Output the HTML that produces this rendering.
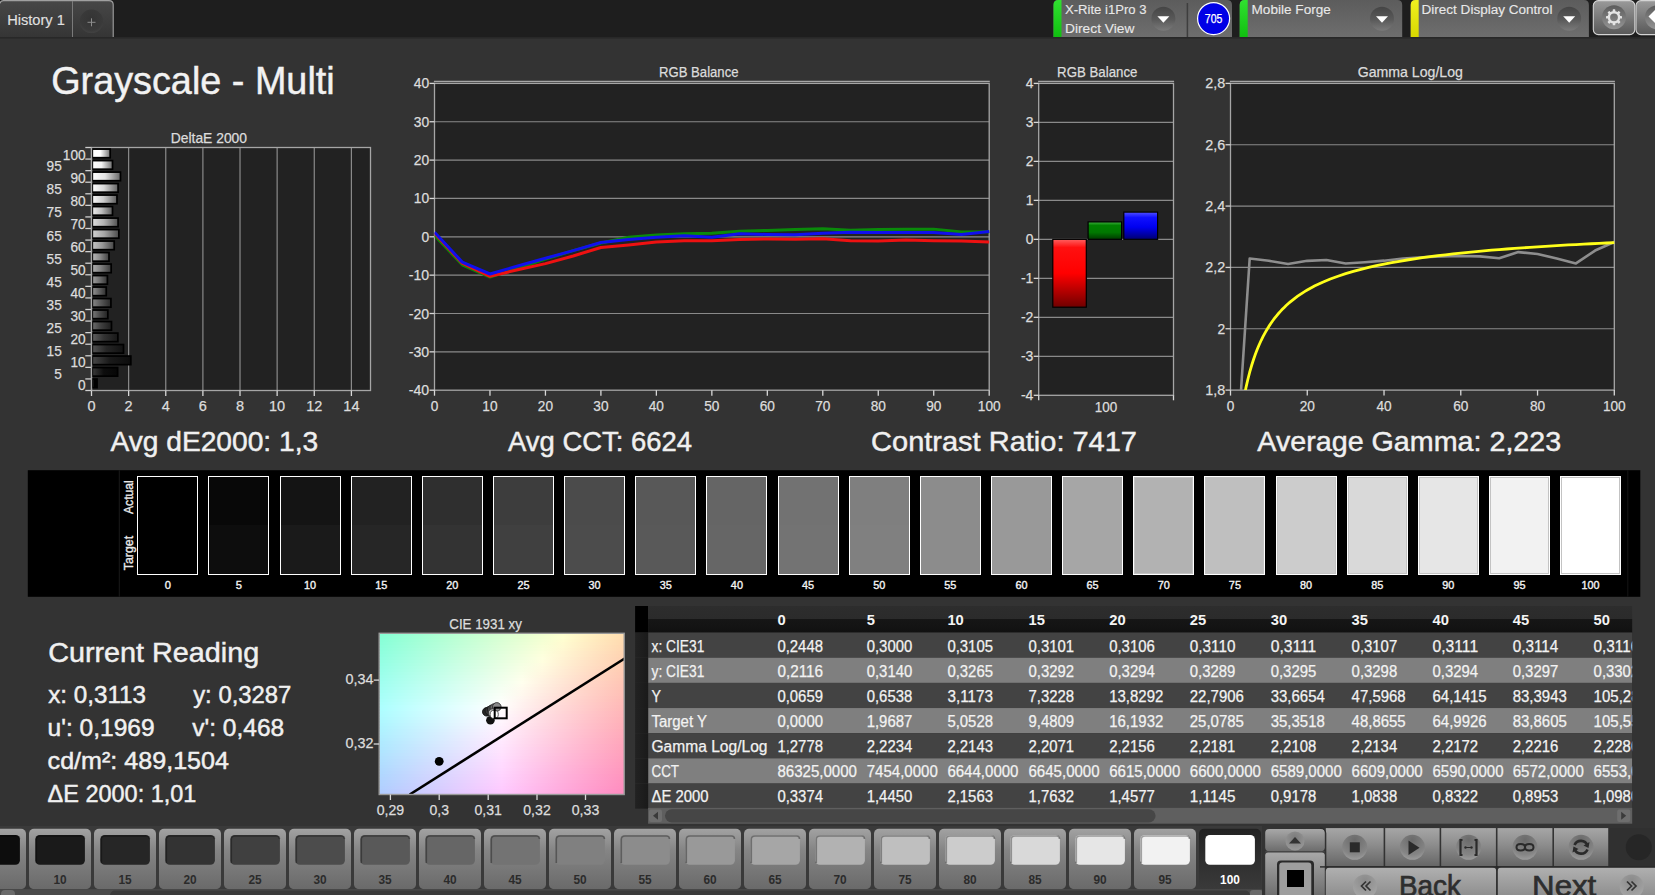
<!DOCTYPE html>
<html><head><meta charset="utf-8"><title>Grayscale - Multi</title>
<style>
html,body{margin:0;padding:0;background:#333;overflow:hidden;width:1655px;height:895px}
svg{display:block;font-family:"Liberation Sans",sans-serif}
</style></head><body>
<svg width="1655" height="895" viewBox="0 0 1655 895">
<defs>
<linearGradient id="gTab" x1="0" y1="0" x2="0" y2="1"><stop offset="0" stop-color="#474747"/><stop offset="1" stop-color="#353535"/></linearGradient>
<radialGradient id="gPlus" cx="0.5" cy="0.4" r="0.6"><stop offset="0" stop-color="#343434"/><stop offset="0.8" stop-color="#3a3a3a"/><stop offset="1" stop-color="#424242"/></radialGradient>
<linearGradient id="gBox" x1="0" y1="0" x2="0" y2="1"><stop offset="0" stop-color="#5c5c5c"/><stop offset="1" stop-color="#6e6e6e"/></linearGradient>
<linearGradient id="gDrop" x1="0" y1="0" x2="0" y2="1"><stop offset="0" stop-color="#454545"/><stop offset="0.55" stop-color="#5a5a5a"/><stop offset="1" stop-color="#7a7a7a"/></linearGradient>
<linearGradient id="gGreen" x1="0" y1="0" x2="0" y2="1"><stop offset="0" stop-color="#30e030"/><stop offset="1" stop-color="#10c010"/></linearGradient>
<linearGradient id="gYellow" x1="0" y1="0" x2="0" y2="1"><stop offset="0" stop-color="#f0f020"/><stop offset="1" stop-color="#d8d800"/></linearGradient>
<linearGradient id="gGearBtn" x1="0" y1="0" x2="0" y2="1"><stop offset="0" stop-color="#9a9a9a"/><stop offset="1" stop-color="#585858"/></linearGradient>
<linearGradient id="gGearC" x1="0" y1="0" x2="0" y2="1"><stop offset="0" stop-color="#5c5c5c"/><stop offset="1" stop-color="#959595"/></linearGradient>
<linearGradient id="gDB0" x1="0" y1="0" x2="1" y2="0"><stop offset="0" stop-color="rgb(45,45,45)"/><stop offset="0.45" stop-color="rgb(0,0,0)"/><stop offset="1" stop-color="rgb(0,0,0)"/></linearGradient>
<linearGradient id="gDB1" x1="0" y1="0" x2="1" y2="0"><stop offset="0" stop-color="rgb(58,58,58)"/><stop offset="0.45" stop-color="rgb(13,13,13)"/><stop offset="1" stop-color="rgb(6,6,6)"/></linearGradient>
<linearGradient id="gDB2" x1="0" y1="0" x2="1" y2="0"><stop offset="0" stop-color="rgb(71,71,71)"/><stop offset="0.45" stop-color="rgb(26,26,26)"/><stop offset="1" stop-color="rgb(12,12,12)"/></linearGradient>
<linearGradient id="gDB3" x1="0" y1="0" x2="1" y2="0"><stop offset="0" stop-color="rgb(83,83,83)"/><stop offset="0.45" stop-color="rgb(38,38,38)"/><stop offset="1" stop-color="rgb(17,17,17)"/></linearGradient>
<linearGradient id="gDB4" x1="0" y1="0" x2="1" y2="0"><stop offset="0" stop-color="rgb(96,96,96)"/><stop offset="0.45" stop-color="rgb(51,51,51)"/><stop offset="1" stop-color="rgb(23,23,23)"/></linearGradient>
<linearGradient id="gDB5" x1="0" y1="0" x2="1" y2="0"><stop offset="0" stop-color="rgb(109,109,109)"/><stop offset="0.45" stop-color="rgb(64,64,64)"/><stop offset="1" stop-color="rgb(29,29,29)"/></linearGradient>
<linearGradient id="gDB6" x1="0" y1="0" x2="1" y2="0"><stop offset="0" stop-color="rgb(121,121,121)"/><stop offset="0.45" stop-color="rgb(76,76,76)"/><stop offset="1" stop-color="rgb(34,34,34)"/></linearGradient>
<linearGradient id="gDB7" x1="0" y1="0" x2="1" y2="0"><stop offset="0" stop-color="rgb(134,134,134)"/><stop offset="0.45" stop-color="rgb(89,89,89)"/><stop offset="1" stop-color="rgb(40,40,40)"/></linearGradient>
<linearGradient id="gDB8" x1="0" y1="0" x2="1" y2="0"><stop offset="0" stop-color="rgb(147,147,147)"/><stop offset="0.45" stop-color="rgb(102,102,102)"/><stop offset="1" stop-color="rgb(46,46,46)"/></linearGradient>
<linearGradient id="gDB9" x1="0" y1="0" x2="1" y2="0"><stop offset="0" stop-color="rgb(160,160,160)"/><stop offset="0.45" stop-color="rgb(115,115,115)"/><stop offset="1" stop-color="rgb(52,52,52)"/></linearGradient>
<linearGradient id="gDB10" x1="0" y1="0" x2="1" y2="0"><stop offset="0" stop-color="rgb(173,173,173)"/><stop offset="0.45" stop-color="rgb(128,128,128)"/><stop offset="1" stop-color="rgb(58,58,58)"/></linearGradient>
<linearGradient id="gDB11" x1="0" y1="0" x2="1" y2="0"><stop offset="0" stop-color="rgb(185,185,185)"/><stop offset="0.45" stop-color="rgb(140,140,140)"/><stop offset="1" stop-color="rgb(63,63,63)"/></linearGradient>
<linearGradient id="gDB12" x1="0" y1="0" x2="1" y2="0"><stop offset="0" stop-color="rgb(198,198,198)"/><stop offset="0.45" stop-color="rgb(153,153,153)"/><stop offset="1" stop-color="rgb(69,69,69)"/></linearGradient>
<linearGradient id="gDB13" x1="0" y1="0" x2="1" y2="0"><stop offset="0" stop-color="rgb(211,211,211)"/><stop offset="0.45" stop-color="rgb(166,166,166)"/><stop offset="1" stop-color="rgb(75,75,75)"/></linearGradient>
<linearGradient id="gDB14" x1="0" y1="0" x2="1" y2="0"><stop offset="0" stop-color="rgb(223,223,223)"/><stop offset="0.45" stop-color="rgb(178,178,178)"/><stop offset="1" stop-color="rgb(80,80,80)"/></linearGradient>
<linearGradient id="gDB15" x1="0" y1="0" x2="1" y2="0"><stop offset="0" stop-color="rgb(236,236,236)"/><stop offset="0.45" stop-color="rgb(191,191,191)"/><stop offset="1" stop-color="rgb(86,86,86)"/></linearGradient>
<linearGradient id="gDB16" x1="0" y1="0" x2="1" y2="0"><stop offset="0" stop-color="rgb(249,249,249)"/><stop offset="0.45" stop-color="rgb(204,204,204)"/><stop offset="1" stop-color="rgb(92,92,92)"/></linearGradient>
<linearGradient id="gDB17" x1="0" y1="0" x2="1" y2="0"><stop offset="0" stop-color="rgb(255,255,255)"/><stop offset="0.45" stop-color="rgb(217,217,217)"/><stop offset="1" stop-color="rgb(98,98,98)"/></linearGradient>
<linearGradient id="gDB18" x1="0" y1="0" x2="1" y2="0"><stop offset="0" stop-color="rgb(255,255,255)"/><stop offset="0.45" stop-color="rgb(230,230,230)"/><stop offset="1" stop-color="rgb(104,104,104)"/></linearGradient>
<linearGradient id="gDB19" x1="0" y1="0" x2="1" y2="0"><stop offset="0" stop-color="rgb(255,255,255)"/><stop offset="0.45" stop-color="rgb(242,242,242)"/><stop offset="1" stop-color="rgb(109,109,109)"/></linearGradient>
<linearGradient id="gDB20" x1="0" y1="0" x2="1" y2="0"><stop offset="0" stop-color="rgb(255,255,255)"/><stop offset="0.45" stop-color="rgb(255,255,255)"/><stop offset="1" stop-color="rgb(115,115,115)"/></linearGradient>
<linearGradient id="gRed" x1="0" y1="0" x2="0" y2="1"><stop offset="0" stop-color="#ff6060"/><stop offset="0.12" stop-color="#ff1010"/><stop offset="0.5" stop-color="#ff0000"/><stop offset="1" stop-color="#700000"/></linearGradient>
<linearGradient id="gGrn" x1="0" y1="0" x2="0" y2="1"><stop offset="0" stop-color="#40b040"/><stop offset="0.2" stop-color="#008000"/><stop offset="0.6" stop-color="#007800"/><stop offset="1" stop-color="#003a00"/></linearGradient>
<linearGradient id="gBlu" x1="0" y1="0" x2="0" y2="1"><stop offset="0" stop-color="#5050ff"/><stop offset="0.2" stop-color="#1010ff"/><stop offset="0.55" stop-color="#0000f0"/><stop offset="1" stop-color="#000070"/></linearGradient>
<linearGradient id="gC0" x1="0" y1="0" x2="1" y2="0"><stop offset="0.000" stop-color="#84ffd4"/><stop offset="0.083" stop-color="#93ffd4"/><stop offset="0.167" stop-color="#a1ffd3"/><stop offset="0.250" stop-color="#afffd3"/><stop offset="0.333" stop-color="#bdffd2"/><stop offset="0.417" stop-color="#caffd2"/><stop offset="0.500" stop-color="#d7ffd1"/><stop offset="0.583" stop-color="#e4ffd1"/><stop offset="0.667" stop-color="#f1ffd0"/><stop offset="0.750" stop-color="#feffcf"/><stop offset="0.833" stop-color="#fff4c5"/><stop offset="0.917" stop-color="#ffe8ba"/><stop offset="1.000" stop-color="#ffddaf"/></linearGradient>
<linearGradient id="gC1" x1="0" y1="0" x2="1" y2="0"><stop offset="0.000" stop-color="#86ffd6"/><stop offset="0.083" stop-color="#95ffd6"/><stop offset="0.167" stop-color="#a3ffd5"/><stop offset="0.250" stop-color="#b1ffd4"/><stop offset="0.333" stop-color="#beffd4"/><stop offset="0.417" stop-color="#ccffd3"/><stop offset="0.500" stop-color="#d9ffd3"/><stop offset="0.583" stop-color="#e6ffd2"/><stop offset="0.667" stop-color="#f3ffd2"/><stop offset="0.750" stop-color="#ffffd1"/><stop offset="0.833" stop-color="#fff2c5"/><stop offset="0.917" stop-color="#ffe7ba"/><stop offset="1.000" stop-color="#ffdcaf"/></linearGradient>
<linearGradient id="gC2" x1="0" y1="0" x2="1" y2="0"><stop offset="0.000" stop-color="#88ffd8"/><stop offset="0.083" stop-color="#96ffd7"/><stop offset="0.167" stop-color="#a4ffd7"/><stop offset="0.250" stop-color="#b2ffd6"/><stop offset="0.333" stop-color="#c0ffd6"/><stop offset="0.417" stop-color="#cdffd5"/><stop offset="0.500" stop-color="#daffd5"/><stop offset="0.583" stop-color="#e7ffd4"/><stop offset="0.667" stop-color="#f4ffd4"/><stop offset="0.750" stop-color="#fffdd1"/><stop offset="0.833" stop-color="#fff1c5"/><stop offset="0.917" stop-color="#ffe5ba"/><stop offset="1.000" stop-color="#ffdab0"/></linearGradient>
<linearGradient id="gC3" x1="0" y1="0" x2="1" y2="0"><stop offset="0.000" stop-color="#89ffd9"/><stop offset="0.083" stop-color="#98ffd9"/><stop offset="0.167" stop-color="#a6ffd8"/><stop offset="0.250" stop-color="#b4ffd8"/><stop offset="0.333" stop-color="#c1ffd7"/><stop offset="0.417" stop-color="#cfffd7"/><stop offset="0.500" stop-color="#dcffd6"/><stop offset="0.583" stop-color="#e9ffd6"/><stop offset="0.667" stop-color="#f6ffd5"/><stop offset="0.750" stop-color="#fffbd1"/><stop offset="0.833" stop-color="#ffefc6"/><stop offset="0.917" stop-color="#ffe4bb"/><stop offset="1.000" stop-color="#ffd9b0"/></linearGradient>
<linearGradient id="gC4" x1="0" y1="0" x2="1" y2="0"><stop offset="0.000" stop-color="#8bffdb"/><stop offset="0.083" stop-color="#99ffdb"/><stop offset="0.167" stop-color="#a7ffda"/><stop offset="0.250" stop-color="#b5ffda"/><stop offset="0.333" stop-color="#c3ffd9"/><stop offset="0.417" stop-color="#d0ffd9"/><stop offset="0.500" stop-color="#deffd8"/><stop offset="0.583" stop-color="#ebffd8"/><stop offset="0.667" stop-color="#f8ffd7"/><stop offset="0.750" stop-color="#fffad2"/><stop offset="0.833" stop-color="#ffeec6"/><stop offset="0.917" stop-color="#ffe2bb"/><stop offset="1.000" stop-color="#ffd7b0"/></linearGradient>
<linearGradient id="gC5" x1="0" y1="0" x2="1" y2="0"><stop offset="0.000" stop-color="#8cffdd"/><stop offset="0.083" stop-color="#9bffdc"/><stop offset="0.167" stop-color="#a9ffdc"/><stop offset="0.250" stop-color="#b7ffdb"/><stop offset="0.333" stop-color="#c5ffdb"/><stop offset="0.417" stop-color="#d2ffda"/><stop offset="0.500" stop-color="#dfffda"/><stop offset="0.583" stop-color="#ecffda"/><stop offset="0.667" stop-color="#f9ffd9"/><stop offset="0.750" stop-color="#fff8d2"/><stop offset="0.833" stop-color="#ffecc6"/><stop offset="0.917" stop-color="#ffe1bb"/><stop offset="1.000" stop-color="#ffd6b1"/></linearGradient>
<linearGradient id="gC6" x1="0" y1="0" x2="1" y2="0"><stop offset="0.000" stop-color="#8effde"/><stop offset="0.083" stop-color="#9cffde"/><stop offset="0.167" stop-color="#abffde"/><stop offset="0.250" stop-color="#b9ffdd"/><stop offset="0.333" stop-color="#c6ffdd"/><stop offset="0.417" stop-color="#d4ffdc"/><stop offset="0.500" stop-color="#e1ffdc"/><stop offset="0.583" stop-color="#eeffdb"/><stop offset="0.667" stop-color="#fbffdb"/><stop offset="0.750" stop-color="#fff6d2"/><stop offset="0.833" stop-color="#ffeac7"/><stop offset="0.917" stop-color="#ffdfbc"/><stop offset="1.000" stop-color="#ffd4b1"/></linearGradient>
<linearGradient id="gC7" x1="0" y1="0" x2="1" y2="0"><stop offset="0.000" stop-color="#8fffe0"/><stop offset="0.083" stop-color="#9effe0"/><stop offset="0.167" stop-color="#acffdf"/><stop offset="0.250" stop-color="#baffdf"/><stop offset="0.333" stop-color="#c8ffde"/><stop offset="0.417" stop-color="#d5ffde"/><stop offset="0.500" stop-color="#e3ffde"/><stop offset="0.583" stop-color="#f0ffdd"/><stop offset="0.667" stop-color="#fdffdd"/><stop offset="0.750" stop-color="#fff5d3"/><stop offset="0.833" stop-color="#ffe9c7"/><stop offset="0.917" stop-color="#ffddbc"/><stop offset="1.000" stop-color="#ffd3b1"/></linearGradient>
<linearGradient id="gC8" x1="0" y1="0" x2="1" y2="0"><stop offset="0.000" stop-color="#91ffe2"/><stop offset="0.083" stop-color="#a0ffe1"/><stop offset="0.167" stop-color="#aeffe1"/><stop offset="0.250" stop-color="#bcffe1"/><stop offset="0.333" stop-color="#caffe0"/><stop offset="0.417" stop-color="#d7ffe0"/><stop offset="0.500" stop-color="#e4ffdf"/><stop offset="0.583" stop-color="#f1ffdf"/><stop offset="0.667" stop-color="#feffdf"/><stop offset="0.750" stop-color="#fff3d3"/><stop offset="0.833" stop-color="#ffe7c7"/><stop offset="0.917" stop-color="#ffdcbc"/><stop offset="1.000" stop-color="#ffd1b2"/></linearGradient>
<linearGradient id="gC9" x1="0" y1="0" x2="1" y2="0"><stop offset="0.000" stop-color="#93ffe3"/><stop offset="0.083" stop-color="#a1ffe3"/><stop offset="0.167" stop-color="#afffe3"/><stop offset="0.250" stop-color="#bdffe2"/><stop offset="0.333" stop-color="#cbffe2"/><stop offset="0.417" stop-color="#d9ffe2"/><stop offset="0.500" stop-color="#e6ffe1"/><stop offset="0.583" stop-color="#f3ffe1"/><stop offset="0.667" stop-color="#fffedf"/><stop offset="0.750" stop-color="#fff1d3"/><stop offset="0.833" stop-color="#ffe5c8"/><stop offset="0.917" stop-color="#ffdabc"/><stop offset="1.000" stop-color="#ffcfb2"/></linearGradient>
<linearGradient id="gC10" x1="0" y1="0" x2="1" y2="0"><stop offset="0.000" stop-color="#94ffe5"/><stop offset="0.083" stop-color="#a3ffe5"/><stop offset="0.167" stop-color="#b1ffe4"/><stop offset="0.250" stop-color="#bfffe4"/><stop offset="0.333" stop-color="#cdffe4"/><stop offset="0.417" stop-color="#daffe3"/><stop offset="0.500" stop-color="#e8ffe3"/><stop offset="0.583" stop-color="#f5ffe3"/><stop offset="0.667" stop-color="#fffce0"/><stop offset="0.750" stop-color="#fff0d3"/><stop offset="0.833" stop-color="#ffe4c8"/><stop offset="0.917" stop-color="#ffd9bd"/><stop offset="1.000" stop-color="#ffceb2"/></linearGradient>
<linearGradient id="gC11" x1="0" y1="0" x2="1" y2="0"><stop offset="0.000" stop-color="#96ffe7"/><stop offset="0.083" stop-color="#a4ffe7"/><stop offset="0.167" stop-color="#b3ffe6"/><stop offset="0.250" stop-color="#c1ffe6"/><stop offset="0.333" stop-color="#ceffe6"/><stop offset="0.417" stop-color="#dcffe5"/><stop offset="0.500" stop-color="#e9ffe5"/><stop offset="0.583" stop-color="#f7ffe5"/><stop offset="0.667" stop-color="#fffae0"/><stop offset="0.750" stop-color="#ffeed4"/><stop offset="0.833" stop-color="#ffe2c8"/><stop offset="0.917" stop-color="#ffd7bd"/><stop offset="1.000" stop-color="#ffccb3"/></linearGradient>
<linearGradient id="gC12" x1="0" y1="0" x2="1" y2="0"><stop offset="0.000" stop-color="#97ffe9"/><stop offset="0.083" stop-color="#a6ffe8"/><stop offset="0.167" stop-color="#b4ffe8"/><stop offset="0.250" stop-color="#c2ffe8"/><stop offset="0.333" stop-color="#d0ffe7"/><stop offset="0.417" stop-color="#deffe7"/><stop offset="0.500" stop-color="#ebffe7"/><stop offset="0.583" stop-color="#f8ffe6"/><stop offset="0.667" stop-color="#fff9e0"/><stop offset="0.750" stop-color="#ffecd4"/><stop offset="0.833" stop-color="#ffe1c8"/><stop offset="0.917" stop-color="#ffd5bd"/><stop offset="1.000" stop-color="#ffcbb3"/></linearGradient>
<linearGradient id="gC13" x1="0" y1="0" x2="1" y2="0"><stop offset="0.000" stop-color="#99ffea"/><stop offset="0.083" stop-color="#a8ffea"/><stop offset="0.167" stop-color="#b6ffea"/><stop offset="0.250" stop-color="#c4ffe9"/><stop offset="0.333" stop-color="#d2ffe9"/><stop offset="0.417" stop-color="#dfffe9"/><stop offset="0.500" stop-color="#edffe9"/><stop offset="0.583" stop-color="#faffe8"/><stop offset="0.667" stop-color="#fff7e0"/><stop offset="0.750" stop-color="#ffebd4"/><stop offset="0.833" stop-color="#ffdfc9"/><stop offset="0.917" stop-color="#ffd4be"/><stop offset="1.000" stop-color="#ffc9b3"/></linearGradient>
<linearGradient id="gC14" x1="0" y1="0" x2="1" y2="0"><stop offset="0.000" stop-color="#9bffec"/><stop offset="0.083" stop-color="#a9ffec"/><stop offset="0.167" stop-color="#b8ffec"/><stop offset="0.250" stop-color="#c6ffeb"/><stop offset="0.333" stop-color="#d4ffeb"/><stop offset="0.417" stop-color="#e1ffeb"/><stop offset="0.500" stop-color="#efffea"/><stop offset="0.583" stop-color="#fcffea"/><stop offset="0.667" stop-color="#fff5e0"/><stop offset="0.750" stop-color="#ffe9d4"/><stop offset="0.833" stop-color="#ffddc9"/><stop offset="0.917" stop-color="#ffd2be"/><stop offset="1.000" stop-color="#ffc8b4"/></linearGradient>
<linearGradient id="gC15" x1="0" y1="0" x2="1" y2="0"><stop offset="0.000" stop-color="#9cffee"/><stop offset="0.083" stop-color="#abffee"/><stop offset="0.167" stop-color="#b9ffed"/><stop offset="0.250" stop-color="#c7ffed"/><stop offset="0.333" stop-color="#d5ffed"/><stop offset="0.417" stop-color="#e3ffed"/><stop offset="0.500" stop-color="#f0ffec"/><stop offset="0.583" stop-color="#feffec"/><stop offset="0.667" stop-color="#fff3e1"/><stop offset="0.750" stop-color="#ffe7d5"/><stop offset="0.833" stop-color="#ffdcc9"/><stop offset="0.917" stop-color="#ffd1be"/><stop offset="1.000" stop-color="#ffc6b4"/></linearGradient>
<linearGradient id="gC16" x1="0" y1="0" x2="1" y2="0"><stop offset="0.000" stop-color="#9efff0"/><stop offset="0.083" stop-color="#adffef"/><stop offset="0.167" stop-color="#bbffef"/><stop offset="0.250" stop-color="#c9ffef"/><stop offset="0.333" stop-color="#d7ffef"/><stop offset="0.417" stop-color="#e5ffee"/><stop offset="0.500" stop-color="#f2ffee"/><stop offset="0.583" stop-color="#ffffee"/><stop offset="0.667" stop-color="#fff2e1"/><stop offset="0.750" stop-color="#ffe6d5"/><stop offset="0.833" stop-color="#ffdaca"/><stop offset="0.917" stop-color="#ffcfbf"/><stop offset="1.000" stop-color="#ffc5b4"/></linearGradient>
<linearGradient id="gC17" x1="0" y1="0" x2="1" y2="0"><stop offset="0.000" stop-color="#a0fff1"/><stop offset="0.083" stop-color="#aefff1"/><stop offset="0.167" stop-color="#bdfff1"/><stop offset="0.250" stop-color="#cbfff1"/><stop offset="0.333" stop-color="#d9fff1"/><stop offset="0.417" stop-color="#e6fff0"/><stop offset="0.500" stop-color="#f4fff0"/><stop offset="0.583" stop-color="#fffdee"/><stop offset="0.667" stop-color="#fff0e1"/><stop offset="0.750" stop-color="#ffe4d5"/><stop offset="0.833" stop-color="#ffd8ca"/><stop offset="0.917" stop-color="#ffcebf"/><stop offset="1.000" stop-color="#ffc3b5"/></linearGradient>
<linearGradient id="gC18" x1="0" y1="0" x2="1" y2="0"><stop offset="0.000" stop-color="#a1fff3"/><stop offset="0.083" stop-color="#b0fff3"/><stop offset="0.167" stop-color="#befff3"/><stop offset="0.250" stop-color="#ccfff3"/><stop offset="0.333" stop-color="#dafff2"/><stop offset="0.417" stop-color="#e8fff2"/><stop offset="0.500" stop-color="#f6fff2"/><stop offset="0.583" stop-color="#fffbee"/><stop offset="0.667" stop-color="#ffeee1"/><stop offset="0.750" stop-color="#ffe2d5"/><stop offset="0.833" stop-color="#ffd7ca"/><stop offset="0.917" stop-color="#ffccbf"/><stop offset="1.000" stop-color="#ffc2b5"/></linearGradient>
<linearGradient id="gC19" x1="0" y1="0" x2="1" y2="0"><stop offset="0.000" stop-color="#a3fff5"/><stop offset="0.083" stop-color="#b2fff5"/><stop offset="0.167" stop-color="#c0fff5"/><stop offset="0.250" stop-color="#cefff4"/><stop offset="0.333" stop-color="#dcfff4"/><stop offset="0.417" stop-color="#eafff4"/><stop offset="0.500" stop-color="#f7fff4"/><stop offset="0.583" stop-color="#fff9ee"/><stop offset="0.667" stop-color="#ffede2"/><stop offset="0.750" stop-color="#ffe1d6"/><stop offset="0.833" stop-color="#ffd5ca"/><stop offset="0.917" stop-color="#ffcac0"/><stop offset="1.000" stop-color="#ffc0b5"/></linearGradient>
<linearGradient id="gC20" x1="0" y1="0" x2="1" y2="0"><stop offset="0.000" stop-color="#a5fff7"/><stop offset="0.083" stop-color="#b3fff7"/><stop offset="0.167" stop-color="#c2fff6"/><stop offset="0.250" stop-color="#d0fff6"/><stop offset="0.333" stop-color="#defff6"/><stop offset="0.417" stop-color="#ecfff6"/><stop offset="0.500" stop-color="#f9fff6"/><stop offset="0.583" stop-color="#fff8ee"/><stop offset="0.667" stop-color="#ffebe2"/><stop offset="0.750" stop-color="#ffdfd6"/><stop offset="0.833" stop-color="#ffd4cb"/><stop offset="0.917" stop-color="#ffc9c0"/><stop offset="1.000" stop-color="#ffbfb6"/></linearGradient>
<linearGradient id="gC21" x1="0" y1="0" x2="1" y2="0"><stop offset="0.000" stop-color="#a6fff8"/><stop offset="0.083" stop-color="#b5fff8"/><stop offset="0.167" stop-color="#c3fff8"/><stop offset="0.250" stop-color="#d2fff8"/><stop offset="0.333" stop-color="#e0fff8"/><stop offset="0.417" stop-color="#edfff8"/><stop offset="0.500" stop-color="#fbfff8"/><stop offset="0.583" stop-color="#fff6ef"/><stop offset="0.667" stop-color="#ffe9e2"/><stop offset="0.750" stop-color="#ffddd6"/><stop offset="0.833" stop-color="#ffd2cb"/><stop offset="0.917" stop-color="#ffc7c0"/><stop offset="1.000" stop-color="#ffbdb6"/></linearGradient>
<linearGradient id="gC22" x1="0" y1="0" x2="1" y2="0"><stop offset="0.000" stop-color="#a8fffa"/><stop offset="0.083" stop-color="#b7fffa"/><stop offset="0.167" stop-color="#c5fffa"/><stop offset="0.250" stop-color="#d3fffa"/><stop offset="0.333" stop-color="#e1fffa"/><stop offset="0.417" stop-color="#effffa"/><stop offset="0.500" stop-color="#fdfffa"/><stop offset="0.583" stop-color="#fff4ef"/><stop offset="0.667" stop-color="#ffe7e2"/><stop offset="0.750" stop-color="#ffdcd6"/><stop offset="0.833" stop-color="#ffd0cb"/><stop offset="0.917" stop-color="#ffc6c0"/><stop offset="1.000" stop-color="#ffbbb6"/></linearGradient>
<linearGradient id="gC23" x1="0" y1="0" x2="1" y2="0"><stop offset="0.000" stop-color="#aafffc"/><stop offset="0.083" stop-color="#b8fffc"/><stop offset="0.167" stop-color="#c7fffc"/><stop offset="0.250" stop-color="#d5fffc"/><stop offset="0.333" stop-color="#e3fffc"/><stop offset="0.417" stop-color="#f1fffc"/><stop offset="0.500" stop-color="#fffffc"/><stop offset="0.583" stop-color="#fff2ef"/><stop offset="0.667" stop-color="#ffe6e2"/><stop offset="0.750" stop-color="#ffdad7"/><stop offset="0.833" stop-color="#ffcfcb"/><stop offset="0.917" stop-color="#ffc4c1"/><stop offset="1.000" stop-color="#ffbab7"/></linearGradient>
<linearGradient id="gC24" x1="0" y1="0" x2="1" y2="0"><stop offset="0.000" stop-color="#abfffe"/><stop offset="0.083" stop-color="#bafffe"/><stop offset="0.167" stop-color="#c9fffe"/><stop offset="0.250" stop-color="#d7fffe"/><stop offset="0.333" stop-color="#e5fffe"/><stop offset="0.417" stop-color="#f3fffe"/><stop offset="0.500" stop-color="#fffefc"/><stop offset="0.583" stop-color="#fff1ef"/><stop offset="0.667" stop-color="#ffe4e3"/><stop offset="0.750" stop-color="#ffd8d7"/><stop offset="0.833" stop-color="#ffcdcc"/><stop offset="0.917" stop-color="#ffc3c1"/><stop offset="1.000" stop-color="#ffb8b7"/></linearGradient>
<linearGradient id="gC25" x1="0" y1="0" x2="1" y2="0"><stop offset="0.000" stop-color="#acfeff"/><stop offset="0.083" stop-color="#bbfeff"/><stop offset="0.167" stop-color="#cafeff"/><stop offset="0.250" stop-color="#d8feff"/><stop offset="0.333" stop-color="#e6feff"/><stop offset="0.417" stop-color="#f4feff"/><stop offset="0.500" stop-color="#fffcfc"/><stop offset="0.583" stop-color="#ffefef"/><stop offset="0.667" stop-color="#ffe2e3"/><stop offset="0.750" stop-color="#ffd7d7"/><stop offset="0.833" stop-color="#ffcccc"/><stop offset="0.917" stop-color="#ffc1c1"/><stop offset="1.000" stop-color="#ffb7b7"/></linearGradient>
<linearGradient id="gC26" x1="0" y1="0" x2="1" y2="0"><stop offset="0.000" stop-color="#adfcff"/><stop offset="0.083" stop-color="#bbfcff"/><stop offset="0.167" stop-color="#cafcff"/><stop offset="0.250" stop-color="#d8fcff"/><stop offset="0.333" stop-color="#e6fcff"/><stop offset="0.417" stop-color="#f4fcff"/><stop offset="0.500" stop-color="#fffafd"/><stop offset="0.583" stop-color="#ffedef"/><stop offset="0.667" stop-color="#ffe1e3"/><stop offset="0.750" stop-color="#ffd5d7"/><stop offset="0.833" stop-color="#ffcacc"/><stop offset="0.917" stop-color="#ffbfc2"/><stop offset="1.000" stop-color="#ffb5b8"/></linearGradient>
<linearGradient id="gC27" x1="0" y1="0" x2="1" y2="0"><stop offset="0.000" stop-color="#adfbff"/><stop offset="0.083" stop-color="#bbfbff"/><stop offset="0.167" stop-color="#cafbff"/><stop offset="0.250" stop-color="#d8fbff"/><stop offset="0.333" stop-color="#e6fbff"/><stop offset="0.417" stop-color="#f4fbff"/><stop offset="0.500" stop-color="#fff8fd"/><stop offset="0.583" stop-color="#ffebf0"/><stop offset="0.667" stop-color="#ffdfe3"/><stop offset="0.750" stop-color="#ffd3d8"/><stop offset="0.833" stop-color="#ffc8cd"/><stop offset="0.917" stop-color="#ffbec2"/><stop offset="1.000" stop-color="#ffb4b8"/></linearGradient>
<linearGradient id="gC28" x1="0" y1="0" x2="1" y2="0"><stop offset="0.000" stop-color="#adf9ff"/><stop offset="0.083" stop-color="#bbf9ff"/><stop offset="0.167" stop-color="#caf9ff"/><stop offset="0.250" stop-color="#d8f9ff"/><stop offset="0.333" stop-color="#e6f9ff"/><stop offset="0.417" stop-color="#f4f9ff"/><stop offset="0.500" stop-color="#fff6fd"/><stop offset="0.583" stop-color="#ffe9f0"/><stop offset="0.667" stop-color="#ffdde4"/><stop offset="0.750" stop-color="#ffd2d8"/><stop offset="0.833" stop-color="#ffc7cd"/><stop offset="0.917" stop-color="#ffbcc2"/><stop offset="1.000" stop-color="#ffb2b8"/></linearGradient>
<linearGradient id="gC29" x1="0" y1="0" x2="1" y2="0"><stop offset="0.000" stop-color="#adf7ff"/><stop offset="0.083" stop-color="#bcf7ff"/><stop offset="0.167" stop-color="#caf7ff"/><stop offset="0.250" stop-color="#d8f7ff"/><stop offset="0.333" stop-color="#e6f7ff"/><stop offset="0.417" stop-color="#f3f7ff"/><stop offset="0.500" stop-color="#fff5fd"/><stop offset="0.583" stop-color="#ffe8f0"/><stop offset="0.667" stop-color="#ffdce4"/><stop offset="0.750" stop-color="#ffd0d8"/><stop offset="0.833" stop-color="#ffc5cd"/><stop offset="0.917" stop-color="#ffbbc3"/><stop offset="1.000" stop-color="#ffb1b8"/></linearGradient>
<linearGradient id="gC30" x1="0" y1="0" x2="1" y2="0"><stop offset="0.000" stop-color="#adf5ff"/><stop offset="0.083" stop-color="#bcf5ff"/><stop offset="0.167" stop-color="#caf5ff"/><stop offset="0.250" stop-color="#d8f5ff"/><stop offset="0.333" stop-color="#e6f5ff"/><stop offset="0.417" stop-color="#f3f5ff"/><stop offset="0.500" stop-color="#fff3fd"/><stop offset="0.583" stop-color="#ffe6f0"/><stop offset="0.667" stop-color="#ffdae4"/><stop offset="0.750" stop-color="#ffced8"/><stop offset="0.833" stop-color="#ffc3cd"/><stop offset="0.917" stop-color="#ffb9c3"/><stop offset="1.000" stop-color="#ffafb9"/></linearGradient>
<linearGradient id="gC31" x1="0" y1="0" x2="1" y2="0"><stop offset="0.000" stop-color="#adf3ff"/><stop offset="0.083" stop-color="#bcf3ff"/><stop offset="0.167" stop-color="#caf3ff"/><stop offset="0.250" stop-color="#d8f3ff"/><stop offset="0.333" stop-color="#e6f3ff"/><stop offset="0.417" stop-color="#f3f3ff"/><stop offset="0.500" stop-color="#fff1fd"/><stop offset="0.583" stop-color="#ffe4f0"/><stop offset="0.667" stop-color="#ffd8e4"/><stop offset="0.750" stop-color="#ffcdd9"/><stop offset="0.833" stop-color="#ffc2ce"/><stop offset="0.917" stop-color="#ffb8c3"/><stop offset="1.000" stop-color="#ffaeb9"/></linearGradient>
<linearGradient id="gC32" x1="0" y1="0" x2="1" y2="0"><stop offset="0.000" stop-color="#adf2ff"/><stop offset="0.083" stop-color="#bcf1ff"/><stop offset="0.167" stop-color="#caf1ff"/><stop offset="0.250" stop-color="#d8f1ff"/><stop offset="0.333" stop-color="#e6f1ff"/><stop offset="0.417" stop-color="#f3f1ff"/><stop offset="0.500" stop-color="#ffeffd"/><stop offset="0.583" stop-color="#ffe2f1"/><stop offset="0.667" stop-color="#ffd6e4"/><stop offset="0.750" stop-color="#ffcbd9"/><stop offset="0.833" stop-color="#ffc0ce"/><stop offset="0.917" stop-color="#ffb6c3"/><stop offset="1.000" stop-color="#ffacb9"/></linearGradient>
<linearGradient id="gC33" x1="0" y1="0" x2="1" y2="0"><stop offset="0.000" stop-color="#aef0ff"/><stop offset="0.083" stop-color="#bcf0ff"/><stop offset="0.167" stop-color="#caefff"/><stop offset="0.250" stop-color="#d8efff"/><stop offset="0.333" stop-color="#e6efff"/><stop offset="0.417" stop-color="#f3efff"/><stop offset="0.500" stop-color="#ffedfe"/><stop offset="0.583" stop-color="#ffe1f1"/><stop offset="0.667" stop-color="#ffd5e5"/><stop offset="0.750" stop-color="#ffc9d9"/><stop offset="0.833" stop-color="#ffbfce"/><stop offset="0.917" stop-color="#ffb4c4"/><stop offset="1.000" stop-color="#ffabba"/></linearGradient>
<linearGradient id="gC34" x1="0" y1="0" x2="1" y2="0"><stop offset="0.000" stop-color="#aeeeff"/><stop offset="0.083" stop-color="#bceeff"/><stop offset="0.167" stop-color="#caeeff"/><stop offset="0.250" stop-color="#d8edff"/><stop offset="0.333" stop-color="#e6edff"/><stop offset="0.417" stop-color="#f3edff"/><stop offset="0.500" stop-color="#ffecfe"/><stop offset="0.583" stop-color="#ffdff1"/><stop offset="0.667" stop-color="#ffd3e5"/><stop offset="0.750" stop-color="#ffc8d9"/><stop offset="0.833" stop-color="#ffbdce"/><stop offset="0.917" stop-color="#ffb3c4"/><stop offset="1.000" stop-color="#ffa9ba"/></linearGradient>
<linearGradient id="gC35" x1="0" y1="0" x2="1" y2="0"><stop offset="0.000" stop-color="#aeecff"/><stop offset="0.083" stop-color="#bcecff"/><stop offset="0.167" stop-color="#caecff"/><stop offset="0.250" stop-color="#d8ecff"/><stop offset="0.333" stop-color="#e6ebff"/><stop offset="0.417" stop-color="#f3ebff"/><stop offset="0.500" stop-color="#ffeafe"/><stop offset="0.583" stop-color="#ffddf1"/><stop offset="0.667" stop-color="#ffd1e5"/><stop offset="0.750" stop-color="#ffc6d9"/><stop offset="0.833" stop-color="#ffbbcf"/><stop offset="0.917" stop-color="#ffb1c4"/><stop offset="1.000" stop-color="#ffa7ba"/></linearGradient>
<linearGradient id="gC36" x1="0" y1="0" x2="1" y2="0"><stop offset="0.000" stop-color="#aeeaff"/><stop offset="0.083" stop-color="#bceaff"/><stop offset="0.167" stop-color="#caeaff"/><stop offset="0.250" stop-color="#d8eaff"/><stop offset="0.333" stop-color="#e5e9ff"/><stop offset="0.417" stop-color="#f3e9ff"/><stop offset="0.500" stop-color="#ffe8fe"/><stop offset="0.583" stop-color="#ffdcf1"/><stop offset="0.667" stop-color="#ffd0e5"/><stop offset="0.750" stop-color="#ffc5da"/><stop offset="0.833" stop-color="#ffbacf"/><stop offset="0.917" stop-color="#ffb0c4"/><stop offset="1.000" stop-color="#ffa6bb"/></linearGradient>
<linearGradient id="gC37" x1="0" y1="0" x2="1" y2="0"><stop offset="0.000" stop-color="#aee9ff"/><stop offset="0.083" stop-color="#bce8ff"/><stop offset="0.167" stop-color="#cae8ff"/><stop offset="0.250" stop-color="#d8e8ff"/><stop offset="0.333" stop-color="#e5e8ff"/><stop offset="0.417" stop-color="#f3e7ff"/><stop offset="0.500" stop-color="#ffe6fe"/><stop offset="0.583" stop-color="#ffdaf1"/><stop offset="0.667" stop-color="#ffcee5"/><stop offset="0.750" stop-color="#ffc3da"/><stop offset="0.833" stop-color="#ffb8cf"/><stop offset="0.917" stop-color="#ffaec5"/><stop offset="1.000" stop-color="#ffa4bb"/></linearGradient>
<linearGradient id="gC38" x1="0" y1="0" x2="1" y2="0"><stop offset="0.000" stop-color="#aee7ff"/><stop offset="0.083" stop-color="#bce7ff"/><stop offset="0.167" stop-color="#cae6ff"/><stop offset="0.250" stop-color="#d8e6ff"/><stop offset="0.333" stop-color="#e5e6ff"/><stop offset="0.417" stop-color="#f3e5ff"/><stop offset="0.500" stop-color="#ffe4fe"/><stop offset="0.583" stop-color="#ffd8f2"/><stop offset="0.667" stop-color="#ffcce6"/><stop offset="0.750" stop-color="#ffc1da"/><stop offset="0.833" stop-color="#ffb7cf"/><stop offset="0.917" stop-color="#ffadc5"/><stop offset="1.000" stop-color="#ffa3bb"/></linearGradient>
<linearGradient id="gC39" x1="0" y1="0" x2="1" y2="0"><stop offset="0.000" stop-color="#aee5ff"/><stop offset="0.083" stop-color="#bce5ff"/><stop offset="0.167" stop-color="#cae4ff"/><stop offset="0.250" stop-color="#d8e4ff"/><stop offset="0.333" stop-color="#e5e4ff"/><stop offset="0.417" stop-color="#f3e4ff"/><stop offset="0.500" stop-color="#ffe3fe"/><stop offset="0.583" stop-color="#ffd6f2"/><stop offset="0.667" stop-color="#ffcbe6"/><stop offset="0.750" stop-color="#ffc0da"/><stop offset="0.833" stop-color="#ffb5d0"/><stop offset="0.917" stop-color="#ffabc5"/><stop offset="1.000" stop-color="#ffa1bb"/></linearGradient>
<linearGradient id="gC40" x1="0" y1="0" x2="1" y2="0"><stop offset="0.000" stop-color="#afe3ff"/><stop offset="0.083" stop-color="#bde3ff"/><stop offset="0.167" stop-color="#cae3ff"/><stop offset="0.250" stop-color="#d8e2ff"/><stop offset="0.333" stop-color="#e5e2ff"/><stop offset="0.417" stop-color="#f2e2ff"/><stop offset="0.500" stop-color="#ffe1fe"/><stop offset="0.583" stop-color="#ffd5f2"/><stop offset="0.667" stop-color="#ffc9e6"/><stop offset="0.750" stop-color="#ffbedb"/><stop offset="0.833" stop-color="#ffb3d0"/><stop offset="0.917" stop-color="#ffa9c6"/><stop offset="1.000" stop-color="#ffa0bc"/></linearGradient>
<linearGradient id="gC41" x1="0" y1="0" x2="1" y2="0"><stop offset="0.000" stop-color="#afe1ff"/><stop offset="0.083" stop-color="#bde1ff"/><stop offset="0.167" stop-color="#cae1ff"/><stop offset="0.250" stop-color="#d8e0ff"/><stop offset="0.333" stop-color="#e5e0ff"/><stop offset="0.417" stop-color="#f2e0ff"/><stop offset="0.500" stop-color="#ffdfff"/><stop offset="0.583" stop-color="#ffd3f2"/><stop offset="0.667" stop-color="#ffc7e6"/><stop offset="0.750" stop-color="#ffbcdb"/><stop offset="0.833" stop-color="#ffb2d0"/><stop offset="0.917" stop-color="#ffa8c6"/><stop offset="1.000" stop-color="#ff9ebc"/></linearGradient>
<linearGradient id="gC42" x1="0" y1="0" x2="1" y2="0"><stop offset="0.000" stop-color="#afe0ff"/><stop offset="0.083" stop-color="#bddfff"/><stop offset="0.167" stop-color="#cadfff"/><stop offset="0.250" stop-color="#d8dfff"/><stop offset="0.333" stop-color="#e5deff"/><stop offset="0.417" stop-color="#f2deff"/><stop offset="0.500" stop-color="#ffddff"/><stop offset="0.583" stop-color="#ffd1f2"/><stop offset="0.667" stop-color="#ffc6e6"/><stop offset="0.750" stop-color="#ffbbdb"/><stop offset="0.833" stop-color="#ffb0d0"/><stop offset="0.917" stop-color="#ffa6c6"/><stop offset="1.000" stop-color="#ff9dbc"/></linearGradient>
<linearGradient id="gC43" x1="0" y1="0" x2="1" y2="0"><stop offset="0.000" stop-color="#afdeff"/><stop offset="0.083" stop-color="#bddeff"/><stop offset="0.167" stop-color="#caddff"/><stop offset="0.250" stop-color="#d8ddff"/><stop offset="0.333" stop-color="#e5dcff"/><stop offset="0.417" stop-color="#f2dcff"/><stop offset="0.500" stop-color="#ffdbff"/><stop offset="0.583" stop-color="#ffcff2"/><stop offset="0.667" stop-color="#ffc4e7"/><stop offset="0.750" stop-color="#ffb9db"/><stop offset="0.833" stop-color="#ffafd1"/><stop offset="0.917" stop-color="#ffa5c6"/><stop offset="1.000" stop-color="#ff9bbd"/></linearGradient>
<linearGradient id="gC44" x1="0" y1="0" x2="1" y2="0"><stop offset="0.000" stop-color="#afdcff"/><stop offset="0.083" stop-color="#bddcff"/><stop offset="0.167" stop-color="#cbdbff"/><stop offset="0.250" stop-color="#d8dbff"/><stop offset="0.333" stop-color="#e5dbff"/><stop offset="0.417" stop-color="#f2daff"/><stop offset="0.500" stop-color="#ffdaff"/><stop offset="0.583" stop-color="#ffcef3"/><stop offset="0.667" stop-color="#ffc2e7"/><stop offset="0.750" stop-color="#ffb7db"/><stop offset="0.833" stop-color="#ffadd1"/><stop offset="0.917" stop-color="#ffa3c7"/><stop offset="1.000" stop-color="#ff9abd"/></linearGradient>
<linearGradient id="gC45" x1="0" y1="0" x2="1" y2="0"><stop offset="0.000" stop-color="#afdaff"/><stop offset="0.083" stop-color="#bddaff"/><stop offset="0.167" stop-color="#cbdaff"/><stop offset="0.250" stop-color="#d8d9ff"/><stop offset="0.333" stop-color="#e5d9ff"/><stop offset="0.417" stop-color="#f2d8ff"/><stop offset="0.500" stop-color="#ffd8ff"/><stop offset="0.583" stop-color="#ffccf3"/><stop offset="0.667" stop-color="#ffc0e7"/><stop offset="0.750" stop-color="#ffb6dc"/><stop offset="0.833" stop-color="#ffabd1"/><stop offset="0.917" stop-color="#ffa1c7"/><stop offset="1.000" stop-color="#ff98bd"/></linearGradient>
<linearGradient id="gC46" x1="0" y1="0" x2="1" y2="0"><stop offset="0.000" stop-color="#afd9ff"/><stop offset="0.083" stop-color="#bdd8ff"/><stop offset="0.167" stop-color="#cbd8ff"/><stop offset="0.250" stop-color="#d8d7ff"/><stop offset="0.333" stop-color="#e5d7ff"/><stop offset="0.417" stop-color="#f2d6ff"/><stop offset="0.500" stop-color="#ffd6ff"/><stop offset="0.583" stop-color="#ffcaf3"/><stop offset="0.667" stop-color="#ffbfe7"/><stop offset="0.750" stop-color="#ffb4dc"/><stop offset="0.833" stop-color="#ffaad1"/><stop offset="0.917" stop-color="#ffa0c7"/><stop offset="1.000" stop-color="#ff97bd"/></linearGradient>
<linearGradient id="gC47" x1="0" y1="0" x2="1" y2="0"><stop offset="0.000" stop-color="#afd7ff"/><stop offset="0.083" stop-color="#bdd6ff"/><stop offset="0.167" stop-color="#cbd6ff"/><stop offset="0.250" stop-color="#d8d5ff"/><stop offset="0.333" stop-color="#e5d5ff"/><stop offset="0.417" stop-color="#f2d4ff"/><stop offset="0.500" stop-color="#ffd4ff"/><stop offset="0.583" stop-color="#ffc8f3"/><stop offset="0.667" stop-color="#ffbde7"/><stop offset="0.750" stop-color="#ffb2dc"/><stop offset="0.833" stop-color="#ffa8d2"/><stop offset="0.917" stop-color="#ff9ec7"/><stop offset="1.000" stop-color="#ff95be"/></linearGradient>
<linearGradient id="gC48" x1="0" y1="0" x2="1" y2="0"><stop offset="0.000" stop-color="#b0d5ff"/><stop offset="0.083" stop-color="#bdd5ff"/><stop offset="0.167" stop-color="#cbd4ff"/><stop offset="0.250" stop-color="#d8d4ff"/><stop offset="0.333" stop-color="#e5d3ff"/><stop offset="0.417" stop-color="#f2d3ff"/><stop offset="0.500" stop-color="#fed2ff"/><stop offset="0.583" stop-color="#ffc7f3"/><stop offset="0.667" stop-color="#ffbbe7"/><stop offset="0.750" stop-color="#ffb1dc"/><stop offset="0.833" stop-color="#ffa7d2"/><stop offset="0.917" stop-color="#ff9dc8"/><stop offset="1.000" stop-color="#ff93be"/></linearGradient>
<linearGradient id="gC49" x1="0" y1="0" x2="1" y2="0"><stop offset="0.000" stop-color="#b0d3ff"/><stop offset="0.083" stop-color="#bdd3ff"/><stop offset="0.167" stop-color="#cbd2ff"/><stop offset="0.250" stop-color="#d8d2ff"/><stop offset="0.333" stop-color="#e5d1ff"/><stop offset="0.417" stop-color="#f2d1ff"/><stop offset="0.500" stop-color="#fed0ff"/><stop offset="0.583" stop-color="#ffc5f3"/><stop offset="0.667" stop-color="#ffbae8"/><stop offset="0.750" stop-color="#ffafdd"/><stop offset="0.833" stop-color="#ffa5d2"/><stop offset="0.917" stop-color="#ff9bc8"/><stop offset="1.000" stop-color="#ff92be"/></linearGradient>
<linearGradient id="gC50" x1="0" y1="0" x2="1" y2="0"><stop offset="0.000" stop-color="#b0d2ff"/><stop offset="0.083" stop-color="#bdd1ff"/><stop offset="0.167" stop-color="#cbd0ff"/><stop offset="0.250" stop-color="#d8d0ff"/><stop offset="0.333" stop-color="#e5cfff"/><stop offset="0.417" stop-color="#f2cfff"/><stop offset="0.500" stop-color="#feceff"/><stop offset="0.583" stop-color="#ffc3f3"/><stop offset="0.667" stop-color="#ffb8e8"/><stop offset="0.750" stop-color="#ffaddd"/><stop offset="0.833" stop-color="#ffa3d2"/><stop offset="0.917" stop-color="#ff9ac8"/><stop offset="1.000" stop-color="#ff90bf"/></linearGradient>
<linearGradient id="gC51" x1="0" y1="0" x2="1" y2="0"><stop offset="0.000" stop-color="#b0d0ff"/><stop offset="0.083" stop-color="#becfff"/><stop offset="0.167" stop-color="#cbcfff"/><stop offset="0.250" stop-color="#d8ceff"/><stop offset="0.333" stop-color="#e5ceff"/><stop offset="0.417" stop-color="#f2cdff"/><stop offset="0.500" stop-color="#feccff"/><stop offset="0.583" stop-color="#ffc1f4"/><stop offset="0.667" stop-color="#ffb6e8"/><stop offset="0.750" stop-color="#ffacdd"/><stop offset="0.833" stop-color="#ffa2d2"/><stop offset="0.917" stop-color="#ff98c8"/><stop offset="1.000" stop-color="#ff8fbf"/></linearGradient>
<linearGradient id="gC52" x1="0" y1="0" x2="1" y2="0"><stop offset="0.000" stop-color="#b0ceff"/><stop offset="0.083" stop-color="#becdff"/><stop offset="0.167" stop-color="#cbcdff"/><stop offset="0.250" stop-color="#d8ccff"/><stop offset="0.333" stop-color="#e5ccff"/><stop offset="0.417" stop-color="#f1cbff"/><stop offset="0.500" stop-color="#fecaff"/><stop offset="0.583" stop-color="#ffc0f4"/><stop offset="0.667" stop-color="#ffb5e8"/><stop offset="0.750" stop-color="#ffaadd"/><stop offset="0.833" stop-color="#ffa0d3"/><stop offset="0.917" stop-color="#ff96c9"/><stop offset="1.000" stop-color="#ff8dbf"/></linearGradient>
<linearGradient id="gC53" x1="0" y1="0" x2="1" y2="0"><stop offset="0.000" stop-color="#b0ccff"/><stop offset="0.083" stop-color="#beccff"/><stop offset="0.167" stop-color="#cbcbff"/><stop offset="0.250" stop-color="#d8cbff"/><stop offset="0.333" stop-color="#e5caff"/><stop offset="0.417" stop-color="#f1c9ff"/><stop offset="0.500" stop-color="#fec9ff"/><stop offset="0.583" stop-color="#ffbef4"/><stop offset="0.667" stop-color="#ffb3e8"/><stop offset="0.750" stop-color="#ffa8dd"/><stop offset="0.833" stop-color="#ff9ed3"/><stop offset="0.917" stop-color="#ff95c9"/><stop offset="1.000" stop-color="#ff8cbf"/></linearGradient>
<linearGradient id="gHdr" x1="0" y1="0" x2="0" y2="1"><stop offset="0" stop-color="#2d2d2d"/><stop offset="0.5" stop-color="#2b2b2b"/><stop offset="0.5" stop-color="#161616"/><stop offset="1" stop-color="#111111"/></linearGradient>
<linearGradient id="gRowH" x1="0" y1="0" x2="1" y2="0"><stop offset="0" stop-color="#222222"/><stop offset="1" stop-color="#1a1a1a"/></linearGradient>
<linearGradient id="gBtn" x1="0" y1="0" x2="0" y2="1"><stop offset="0" stop-color="#a2a2a2"/><stop offset="0.35" stop-color="#858585"/><stop offset="1" stop-color="#6a6a6a"/></linearGradient>
<linearGradient id="gBtnSel" x1="0" y1="0" x2="0" y2="1"><stop offset="0" stop-color="#222222"/><stop offset="1" stop-color="#3a3a3a"/></linearGradient>
<linearGradient id="gBtn2" x1="0" y1="0" x2="0" y2="1"><stop offset="0" stop-color="#a8a8a8"/><stop offset="0.5" stop-color="#8a8a8a"/><stop offset="1" stop-color="#6c6c6c"/></linearGradient>
<radialGradient id="gDrop2" cx="0.5" cy="0.35" r="0.7"><stop offset="0" stop-color="#7a7a7a"/><stop offset="1" stop-color="#9a9a9a"/></radialGradient>
<linearGradient id="gCtl" x1="0" y1="0" x2="0" y2="1"><stop offset="0" stop-color="#a6a6a6"/><stop offset="0.45" stop-color="#8c8c8c"/><stop offset="1" stop-color="#666666"/></linearGradient>
<radialGradient id="gCtlC" cx="0.5" cy="0.2" r="0.85"><stop offset="0" stop-color="#6a6a6a"/><stop offset="0.7" stop-color="#858585"/><stop offset="1" stop-color="#a0a0a0"/></radialGradient>
<linearGradient id="gNav" x1="0" y1="0" x2="0" y2="1"><stop offset="0" stop-color="#b0b0b0"/><stop offset="1" stop-color="#8a8a8a"/></linearGradient>
<radialGradient id="gNavC" cx="0.5" cy="0.25" r="0.8"><stop offset="0" stop-color="#8a8a8a"/><stop offset="1" stop-color="#a8a8a8"/></radialGradient>
</defs>
<rect x="0.00" y="0.00" width="1655.00" height="895.00" fill="#333333"/>
<rect x="0.00" y="0.00" width="1655.00" height="37.00" fill="#1e1e1e"/>
<path d="M0,37 L0,3 Q0,0.5 3,0.5 L109.5,0.5 Q113.5,0.5 113.5,4.5 L113.5,37 Z" fill="url(#gTab)"/>
<path d="M0,3.5 Q0.5,0.6 3.5,0.6 L109,0.6 Q113.2,0.6 113.2,4.8 L113.2,37" fill="none" stroke="#a0a0a0" stroke-width="1.1"/>
<line x1="72.50" y1="1.00" x2="72.50" y2="37.00" stroke="#7a7a7a" stroke-width="1"/>
<circle cx="91.5" cy="21.3" r="11.8" fill="url(#gPlus)"/>
<line x1="87.50" y1="22.30" x2="95.50" y2="22.30" stroke="#8c8c8c" stroke-width="1"/>
<line x1="91.50" y1="18.30" x2="91.50" y2="26.30" stroke="#8c8c8c" stroke-width="1"/>
<text x="7.20" y="25.00" font-size="14.68" fill="#e0e0e0" text-anchor="start" font-weight="normal" textLength="57.7" lengthAdjust="spacingAndGlyphs" stroke="#e0e0e0" stroke-width="0.12">History 1</text>
<path d="M1053.5,37 L1053.5,5 Q1053.5,0 1058.5,0 L1227,0 Q1232,0 1232,5 L1232,37 Z" fill="url(#gBox)"/>
<path d="M1053.5,37 L1053.5,5 Q1053.5,0 1058.5,0 L1061.5,0 L1061.5,37 Z" fill="url(#gGreen)"/>
<text x="1065.00" y="14.30" font-size="13.08" fill="#e8e8e8" text-anchor="start" font-weight="normal" textLength="81.5" lengthAdjust="spacingAndGlyphs" stroke="#e8e8e8" stroke-width="0.12">X-Rite i1Pro 3</text>
<text x="1065.00" y="32.60" font-size="13.08" fill="#e8e8e8" text-anchor="start" font-weight="normal" textLength="69.4" lengthAdjust="spacingAndGlyphs" stroke="#e8e8e8" stroke-width="0.12">Direct View</text>
<circle cx="1163.4" cy="18.7" r="12" fill="url(#gDrop)"/>
<path d="M1157.4,16.2 L1169.4,16.2 L1163.4,22.7 Z" fill="#ffffff"/>
<line x1="1187.40" y1="3.00" x2="1187.40" y2="37.00" stroke="#3e3e3e" stroke-width="1.5"/>
<circle cx="1213.6" cy="18.6" r="16" fill="#0000e6" stroke="#ffffff" stroke-width="1.2"/>
<text x="1213.60" y="23.00" font-size="12.35" fill="#ffffff" text-anchor="middle" font-weight="normal" textLength="17.5" lengthAdjust="spacingAndGlyphs" stroke="#ffffff" stroke-width="0.25">705</text>
<path d="M1239.7,37 L1239.7,5 Q1239.7,0 1244.7,0 L1397.2,0 Q1402.2,0 1402.2,5 L1402.2,37 Z" fill="url(#gBox)"/>
<path d="M1239.7,37 L1239.7,5 Q1239.7,0 1244.7,0 L1247.7,0 L1247.7,37 Z" fill="url(#gGreen)"/>
<text x="1251.50" y="14.30" font-size="13.08" fill="#e8e8e8" text-anchor="start" font-weight="normal" textLength="79.4" lengthAdjust="spacingAndGlyphs" stroke="#e8e8e8" stroke-width="0.12">Mobile Forge</text>
<circle cx="1382" cy="18.7" r="12" fill="url(#gDrop)"/>
<path d="M1376,16.2 L1388,16.2 L1382,22.7 Z" fill="#ffffff"/>
<path d="M1410.7,37 L1410.7,5 Q1410.7,0 1415.7,0 L1583.9,0 Q1588.9,0 1588.9,5 L1588.9,37 Z" fill="url(#gBox)"/>
<path d="M1410.7,37 L1410.7,5 Q1410.7,0 1415.7,0 L1418.7,0 L1418.7,37 Z" fill="url(#gYellow)"/>
<text x="1421.50" y="13.90" font-size="13.08" fill="#e8e8e8" text-anchor="start" font-weight="normal" textLength="130.9" lengthAdjust="spacingAndGlyphs" stroke="#e8e8e8" stroke-width="0.12">Direct Display Control</text>
<circle cx="1569.2" cy="18.7" r="12" fill="url(#gDrop)"/>
<path d="M1563.2,16.2 L1575.2,16.2 L1569.2,22.7 Z" fill="#ffffff"/>
<rect x="1593.3" y="0.6" width="41.5" height="34" rx="5" fill="url(#gGearBtn)" stroke="#d4d4d4" stroke-width="1.1"/>
<circle cx="1614" cy="17.3" r="12" fill="url(#gGearC)"/>
<g transform="translate(1614,17.3)"><rect x="-1.3" y="-8" width="2.6" height="3.6" rx="0.6" transform="rotate(0)" fill="#e4e4e4"/><rect x="-1.3" y="-8" width="2.6" height="3.6" rx="0.6" transform="rotate(45)" fill="#e4e4e4"/><rect x="-1.3" y="-8" width="2.6" height="3.6" rx="0.6" transform="rotate(90)" fill="#e4e4e4"/><rect x="-1.3" y="-8" width="2.6" height="3.6" rx="0.6" transform="rotate(135)" fill="#e4e4e4"/><rect x="-1.3" y="-8" width="2.6" height="3.6" rx="0.6" transform="rotate(180)" fill="#e4e4e4"/><rect x="-1.3" y="-8" width="2.6" height="3.6" rx="0.6" transform="rotate(225)" fill="#e4e4e4"/><rect x="-1.3" y="-8" width="2.6" height="3.6" rx="0.6" transform="rotate(270)" fill="#e4e4e4"/><rect x="-1.3" y="-8" width="2.6" height="3.6" rx="0.6" transform="rotate(315)" fill="#e4e4e4"/><circle r="5.1" fill="none" stroke="#e4e4e4" stroke-width="2.4"/></g>
<rect x="1636" y="0.6" width="30" height="34" rx="5" fill="url(#gGearBtn)" stroke="#d4d4d4" stroke-width="1.1"/>
<circle cx="1657" cy="17.3" r="12" fill="url(#gGearC)"/>
<path d="M1648.5,16.5 L1655,10 L1655,23 Z" fill="#ffffff"/>
<rect x="0.00" y="37.00" width="1655.00" height="1.60" fill="#282828"/>
<text x="51.20" y="94.30" font-size="38.66" fill="#f2f2f2" text-anchor="start" font-weight="normal" textLength="283.5" lengthAdjust="spacingAndGlyphs" stroke="#f2f2f2" stroke-width="0.45">Grayscale - Multi</text>
<text x="170.80" y="143.00" font-size="14.53" fill="#dcdcdc" text-anchor="start" font-weight="normal" textLength="76.2" lengthAdjust="spacingAndGlyphs" stroke="#dcdcdc" stroke-width="0.25">DeltaE 2000</text>
<rect x="91.50" y="147.50" width="279.00" height="243.00" fill="#222222"/>
<line x1="128.63" y1="147.50" x2="128.63" y2="390.50" stroke="#8a8a8a" stroke-width="1.2"/>
<line x1="165.76" y1="147.50" x2="165.76" y2="390.50" stroke="#8a8a8a" stroke-width="1.2"/>
<line x1="202.89" y1="147.50" x2="202.89" y2="390.50" stroke="#8a8a8a" stroke-width="1.2"/>
<line x1="240.01" y1="147.50" x2="240.01" y2="390.50" stroke="#8a8a8a" stroke-width="1.2"/>
<line x1="277.14" y1="147.50" x2="277.14" y2="390.50" stroke="#8a8a8a" stroke-width="1.2"/>
<line x1="314.27" y1="147.50" x2="314.27" y2="390.50" stroke="#8a8a8a" stroke-width="1.2"/>
<line x1="351.40" y1="147.50" x2="351.40" y2="390.50" stroke="#8a8a8a" stroke-width="1.2"/>
<rect x="91.5" y="147.5" width="279.0" height="243.0" fill="none" stroke="#a6a6a6" stroke-width="1.3"/>
<line x1="91.50" y1="390.50" x2="91.50" y2="396.00" stroke="#d8d8d8" stroke-width="1.3"/>
<text x="91.50" y="411.00" font-size="14.53" fill="#dcdcdc" text-anchor="middle" font-weight="normal" stroke="#dcdcdc" stroke-width="0.25">0</text>
<line x1="128.63" y1="390.50" x2="128.63" y2="396.00" stroke="#d8d8d8" stroke-width="1.3"/>
<text x="128.63" y="411.00" font-size="14.53" fill="#dcdcdc" text-anchor="middle" font-weight="normal" stroke="#dcdcdc" stroke-width="0.25">2</text>
<line x1="165.76" y1="390.50" x2="165.76" y2="396.00" stroke="#d8d8d8" stroke-width="1.3"/>
<text x="165.76" y="411.00" font-size="14.53" fill="#dcdcdc" text-anchor="middle" font-weight="normal" stroke="#dcdcdc" stroke-width="0.25">4</text>
<line x1="202.89" y1="390.50" x2="202.89" y2="396.00" stroke="#d8d8d8" stroke-width="1.3"/>
<text x="202.89" y="411.00" font-size="14.53" fill="#dcdcdc" text-anchor="middle" font-weight="normal" stroke="#dcdcdc" stroke-width="0.25">6</text>
<line x1="240.01" y1="390.50" x2="240.01" y2="396.00" stroke="#d8d8d8" stroke-width="1.3"/>
<text x="240.01" y="411.00" font-size="14.53" fill="#dcdcdc" text-anchor="middle" font-weight="normal" stroke="#dcdcdc" stroke-width="0.25">8</text>
<line x1="277.14" y1="390.50" x2="277.14" y2="396.00" stroke="#d8d8d8" stroke-width="1.3"/>
<text x="277.14" y="411.00" font-size="14.53" fill="#dcdcdc" text-anchor="middle" font-weight="normal" stroke="#dcdcdc" stroke-width="0.25">10</text>
<line x1="314.27" y1="390.50" x2="314.27" y2="396.00" stroke="#d8d8d8" stroke-width="1.3"/>
<text x="314.27" y="411.00" font-size="14.53" fill="#dcdcdc" text-anchor="middle" font-weight="normal" stroke="#dcdcdc" stroke-width="0.25">12</text>
<line x1="351.40" y1="390.50" x2="351.40" y2="396.00" stroke="#d8d8d8" stroke-width="1.3"/>
<text x="351.40" y="411.00" font-size="14.53" fill="#dcdcdc" text-anchor="middle" font-weight="normal" stroke="#dcdcdc" stroke-width="0.25">14</text>
<line x1="85.30" y1="390.50" x2="91.50" y2="390.50" stroke="#d0d0d0" stroke-width="1.3"/>
<line x1="85.30" y1="378.93" x2="91.50" y2="378.93" stroke="#d0d0d0" stroke-width="1.3"/>
<line x1="85.30" y1="367.36" x2="91.50" y2="367.36" stroke="#d0d0d0" stroke-width="1.3"/>
<line x1="85.30" y1="355.79" x2="91.50" y2="355.79" stroke="#d0d0d0" stroke-width="1.3"/>
<line x1="85.30" y1="344.21" x2="91.50" y2="344.21" stroke="#d0d0d0" stroke-width="1.3"/>
<line x1="85.30" y1="332.64" x2="91.50" y2="332.64" stroke="#d0d0d0" stroke-width="1.3"/>
<line x1="85.30" y1="321.07" x2="91.50" y2="321.07" stroke="#d0d0d0" stroke-width="1.3"/>
<line x1="85.30" y1="309.50" x2="91.50" y2="309.50" stroke="#d0d0d0" stroke-width="1.3"/>
<line x1="85.30" y1="297.93" x2="91.50" y2="297.93" stroke="#d0d0d0" stroke-width="1.3"/>
<line x1="85.30" y1="286.36" x2="91.50" y2="286.36" stroke="#d0d0d0" stroke-width="1.3"/>
<line x1="85.30" y1="274.79" x2="91.50" y2="274.79" stroke="#d0d0d0" stroke-width="1.3"/>
<line x1="85.30" y1="263.21" x2="91.50" y2="263.21" stroke="#d0d0d0" stroke-width="1.3"/>
<line x1="85.30" y1="251.64" x2="91.50" y2="251.64" stroke="#d0d0d0" stroke-width="1.3"/>
<line x1="85.30" y1="240.07" x2="91.50" y2="240.07" stroke="#d0d0d0" stroke-width="1.3"/>
<line x1="85.30" y1="228.50" x2="91.50" y2="228.50" stroke="#d0d0d0" stroke-width="1.3"/>
<line x1="85.30" y1="216.93" x2="91.50" y2="216.93" stroke="#d0d0d0" stroke-width="1.3"/>
<line x1="85.30" y1="205.36" x2="91.50" y2="205.36" stroke="#d0d0d0" stroke-width="1.3"/>
<line x1="85.30" y1="193.79" x2="91.50" y2="193.79" stroke="#d0d0d0" stroke-width="1.3"/>
<line x1="85.30" y1="182.21" x2="91.50" y2="182.21" stroke="#d0d0d0" stroke-width="1.3"/>
<line x1="85.30" y1="170.64" x2="91.50" y2="170.64" stroke="#d0d0d0" stroke-width="1.3"/>
<line x1="85.30" y1="159.07" x2="91.50" y2="159.07" stroke="#d0d0d0" stroke-width="1.3"/>
<line x1="85.30" y1="147.50" x2="91.50" y2="147.50" stroke="#d0d0d0" stroke-width="1.3"/>
<text x="85.60" y="390.40" font-size="14.24" fill="#dcdcdc" text-anchor="end" font-weight="normal" textLength="7.6" lengthAdjust="spacingAndGlyphs" stroke="#dcdcdc" stroke-width="0.25">0</text>
<rect x="92.3" y="379.04" width="4.76" height="8.6" fill="url(#gDB0)" stroke="#000" stroke-width="1.7"/>
<text x="61.80" y="378.87" font-size="14.24" fill="#dcdcdc" text-anchor="end" font-weight="normal" textLength="7.6" lengthAdjust="spacingAndGlyphs" stroke="#dcdcdc" stroke-width="0.25">5</text>
<rect x="92.3" y="367.55" width="25.33" height="8.6" fill="url(#gDB1)" stroke="#000" stroke-width="1.7"/>
<text x="85.60" y="367.34" font-size="14.24" fill="#dcdcdc" text-anchor="end" font-weight="normal" textLength="15.2" lengthAdjust="spacingAndGlyphs" stroke="#dcdcdc" stroke-width="0.25">10</text>
<rect x="92.3" y="356.05" width="38.53" height="8.6" fill="url(#gDB2)" stroke="#000" stroke-width="1.7"/>
<text x="61.80" y="355.81" font-size="14.24" fill="#dcdcdc" text-anchor="end" font-weight="normal" textLength="15.2" lengthAdjust="spacingAndGlyphs" stroke="#dcdcdc" stroke-width="0.25">15</text>
<rect x="92.3" y="344.55" width="31.23" height="8.6" fill="url(#gDB3)" stroke="#000" stroke-width="1.7"/>
<text x="85.60" y="344.28" font-size="14.24" fill="#dcdcdc" text-anchor="end" font-weight="normal" textLength="15.2" lengthAdjust="spacingAndGlyphs" stroke="#dcdcdc" stroke-width="0.25">20</text>
<rect x="92.3" y="333.06" width="25.56" height="8.6" fill="url(#gDB4)" stroke="#000" stroke-width="1.7"/>
<text x="61.80" y="332.75" font-size="14.24" fill="#dcdcdc" text-anchor="end" font-weight="normal" textLength="15.2" lengthAdjust="spacingAndGlyphs" stroke="#dcdcdc" stroke-width="0.25">25</text>
<rect x="92.3" y="321.56" width="19.19" height="8.6" fill="url(#gDB5)" stroke="#000" stroke-width="1.7"/>
<text x="85.60" y="321.22" font-size="14.24" fill="#dcdcdc" text-anchor="end" font-weight="normal" textLength="15.2" lengthAdjust="spacingAndGlyphs" stroke="#dcdcdc" stroke-width="0.25">30</text>
<rect x="92.3" y="310.06" width="15.54" height="8.6" fill="url(#gDB6)" stroke="#000" stroke-width="1.7"/>
<text x="61.80" y="309.69" font-size="14.24" fill="#dcdcdc" text-anchor="end" font-weight="normal" textLength="15.2" lengthAdjust="spacingAndGlyphs" stroke="#dcdcdc" stroke-width="0.25">35</text>
<rect x="92.3" y="298.56" width="18.62" height="8.6" fill="url(#gDB7)" stroke="#000" stroke-width="1.7"/>
<text x="85.60" y="298.16" font-size="14.24" fill="#dcdcdc" text-anchor="end" font-weight="normal" textLength="15.2" lengthAdjust="spacingAndGlyphs" stroke="#dcdcdc" stroke-width="0.25">40</text>
<rect x="92.3" y="287.07" width="13.95" height="8.6" fill="url(#gDB8)" stroke="#000" stroke-width="1.7"/>
<text x="61.80" y="286.63" font-size="14.24" fill="#dcdcdc" text-anchor="end" font-weight="normal" textLength="15.2" lengthAdjust="spacingAndGlyphs" stroke="#dcdcdc" stroke-width="0.25">45</text>
<rect x="92.3" y="275.57" width="15.12" height="8.6" fill="url(#gDB9)" stroke="#000" stroke-width="1.7"/>
<text x="85.60" y="275.10" font-size="14.24" fill="#dcdcdc" text-anchor="end" font-weight="normal" textLength="15.2" lengthAdjust="spacingAndGlyphs" stroke="#dcdcdc" stroke-width="0.25">50</text>
<rect x="92.3" y="264.07" width="18.88" height="8.6" fill="url(#gDB10)" stroke="#000" stroke-width="1.7"/>
<text x="61.80" y="263.57" font-size="14.24" fill="#dcdcdc" text-anchor="end" font-weight="normal" textLength="15.2" lengthAdjust="spacingAndGlyphs" stroke="#dcdcdc" stroke-width="0.25">55</text>
<rect x="92.3" y="252.58" width="16.69" height="8.6" fill="url(#gDB11)" stroke="#000" stroke-width="1.7"/>
<text x="85.60" y="252.04" font-size="14.24" fill="#dcdcdc" text-anchor="end" font-weight="normal" textLength="15.2" lengthAdjust="spacingAndGlyphs" stroke="#dcdcdc" stroke-width="0.25">60</text>
<rect x="92.3" y="241.08" width="21.89" height="8.6" fill="url(#gDB12)" stroke="#000" stroke-width="1.7"/>
<text x="61.80" y="240.51" font-size="14.24" fill="#dcdcdc" text-anchor="end" font-weight="normal" textLength="15.2" lengthAdjust="spacingAndGlyphs" stroke="#dcdcdc" stroke-width="0.25">65</text>
<rect x="92.3" y="229.58" width="26.53" height="8.6" fill="url(#gDB13)" stroke="#000" stroke-width="1.7"/>
<text x="85.60" y="228.98" font-size="14.24" fill="#dcdcdc" text-anchor="end" font-weight="normal" textLength="15.2" lengthAdjust="spacingAndGlyphs" stroke="#dcdcdc" stroke-width="0.25">70</text>
<rect x="92.3" y="218.09" width="25.79" height="8.6" fill="url(#gDB14)" stroke="#000" stroke-width="1.7"/>
<text x="61.80" y="217.45" font-size="14.24" fill="#dcdcdc" text-anchor="end" font-weight="normal" textLength="15.2" lengthAdjust="spacingAndGlyphs" stroke="#dcdcdc" stroke-width="0.25">75</text>
<rect x="92.3" y="206.59" width="20.22" height="8.6" fill="url(#gDB15)" stroke="#000" stroke-width="1.7"/>
<text x="85.60" y="205.92" font-size="14.24" fill="#dcdcdc" text-anchor="end" font-weight="normal" textLength="15.2" lengthAdjust="spacingAndGlyphs" stroke="#dcdcdc" stroke-width="0.25">80</text>
<rect x="92.3" y="195.09" width="24.68" height="8.6" fill="url(#gDB16)" stroke="#000" stroke-width="1.7"/>
<text x="61.80" y="194.39" font-size="14.24" fill="#dcdcdc" text-anchor="end" font-weight="normal" textLength="15.2" lengthAdjust="spacingAndGlyphs" stroke="#dcdcdc" stroke-width="0.25">85</text>
<rect x="92.3" y="183.60" width="25.79" height="8.6" fill="url(#gDB17)" stroke="#000" stroke-width="1.7"/>
<text x="85.60" y="182.86" font-size="14.24" fill="#dcdcdc" text-anchor="end" font-weight="normal" textLength="15.2" lengthAdjust="spacingAndGlyphs" stroke="#dcdcdc" stroke-width="0.25">90</text>
<rect x="92.3" y="172.10" width="28.20" height="8.6" fill="url(#gDB18)" stroke="#000" stroke-width="1.7"/>
<text x="61.80" y="171.33" font-size="14.24" fill="#dcdcdc" text-anchor="end" font-weight="normal" textLength="15.2" lengthAdjust="spacingAndGlyphs" stroke="#dcdcdc" stroke-width="0.25">95</text>
<rect x="92.3" y="160.60" width="20.22" height="8.6" fill="url(#gDB19)" stroke="#000" stroke-width="1.7"/>
<text x="85.60" y="159.80" font-size="14.24" fill="#dcdcdc" text-anchor="end" font-weight="normal" textLength="22.8" lengthAdjust="spacingAndGlyphs" stroke="#dcdcdc" stroke-width="0.25">100</text>
<rect x="92.3" y="149.10" width="17.90" height="8.6" fill="url(#gDB20)" stroke="#000" stroke-width="1.7"/>
<line x1="91.50" y1="147.50" x2="91.50" y2="390.50" stroke="#a6a6a6" stroke-width="1.3"/>
<text x="659.00" y="77.40" font-size="14.83" fill="#dcdcdc" text-anchor="start" font-weight="normal" textLength="79.5" lengthAdjust="spacingAndGlyphs" stroke="#dcdcdc" stroke-width="0.25">RGB Balance</text>
<rect x="434.50" y="83.40" width="554.70" height="306.80" fill="#222222"/>
<line x1="434.50" y1="121.75" x2="989.20" y2="121.75" stroke="#8a8a8a" stroke-width="1.2"/>
<line x1="434.50" y1="160.10" x2="989.20" y2="160.10" stroke="#8a8a8a" stroke-width="1.2"/>
<line x1="434.50" y1="198.45" x2="989.20" y2="198.45" stroke="#8a8a8a" stroke-width="1.2"/>
<line x1="434.50" y1="236.80" x2="989.20" y2="236.80" stroke="#8a8a8a" stroke-width="1.2"/>
<line x1="434.50" y1="275.15" x2="989.20" y2="275.15" stroke="#8a8a8a" stroke-width="1.2"/>
<line x1="434.50" y1="313.50" x2="989.20" y2="313.50" stroke="#8a8a8a" stroke-width="1.2"/>
<line x1="434.50" y1="351.85" x2="989.20" y2="351.85" stroke="#8a8a8a" stroke-width="1.2"/>
<rect x="434.5" y="83.4" width="554.7" height="306.79999999999995" fill="none" stroke="#a6a6a6" stroke-width="1.3"/>
<rect x="434.00" y="81.90" width="555.70" height="1.10" fill="#555555"/>
<line x1="433.90" y1="81.40" x2="989.80" y2="81.40" stroke="#a6a6a6" stroke-width="1.1"/>
<line x1="429.50" y1="83.40" x2="434.50" y2="83.40" stroke="#d8d8d8" stroke-width="1.3"/>
<text x="429.20" y="88.40" font-size="14.68" fill="#dcdcdc" text-anchor="end" font-weight="normal" textLength="15.4" lengthAdjust="spacingAndGlyphs" stroke="#dcdcdc" stroke-width="0.25">40</text>
<line x1="429.50" y1="121.75" x2="434.50" y2="121.75" stroke="#d8d8d8" stroke-width="1.3"/>
<text x="429.20" y="126.75" font-size="14.68" fill="#dcdcdc" text-anchor="end" font-weight="normal" textLength="15.4" lengthAdjust="spacingAndGlyphs" stroke="#dcdcdc" stroke-width="0.25">30</text>
<line x1="429.50" y1="160.10" x2="434.50" y2="160.10" stroke="#d8d8d8" stroke-width="1.3"/>
<text x="429.20" y="165.10" font-size="14.68" fill="#dcdcdc" text-anchor="end" font-weight="normal" textLength="15.4" lengthAdjust="spacingAndGlyphs" stroke="#dcdcdc" stroke-width="0.25">20</text>
<line x1="429.50" y1="198.45" x2="434.50" y2="198.45" stroke="#d8d8d8" stroke-width="1.3"/>
<text x="429.20" y="203.45" font-size="14.68" fill="#dcdcdc" text-anchor="end" font-weight="normal" textLength="15.4" lengthAdjust="spacingAndGlyphs" stroke="#dcdcdc" stroke-width="0.25">10</text>
<line x1="429.50" y1="236.80" x2="434.50" y2="236.80" stroke="#d8d8d8" stroke-width="1.3"/>
<text x="429.20" y="241.80" font-size="14.68" fill="#dcdcdc" text-anchor="end" font-weight="normal" textLength="7.7" lengthAdjust="spacingAndGlyphs" stroke="#dcdcdc" stroke-width="0.25">0</text>
<line x1="429.50" y1="275.15" x2="434.50" y2="275.15" stroke="#d8d8d8" stroke-width="1.3"/>
<text x="429.20" y="280.15" font-size="14.68" fill="#dcdcdc" text-anchor="end" font-weight="normal" textLength="20.4" lengthAdjust="spacingAndGlyphs" stroke="#dcdcdc" stroke-width="0.25">-10</text>
<line x1="429.50" y1="313.50" x2="434.50" y2="313.50" stroke="#d8d8d8" stroke-width="1.3"/>
<text x="429.20" y="318.50" font-size="14.68" fill="#dcdcdc" text-anchor="end" font-weight="normal" textLength="20.4" lengthAdjust="spacingAndGlyphs" stroke="#dcdcdc" stroke-width="0.25">-20</text>
<line x1="429.50" y1="351.85" x2="434.50" y2="351.85" stroke="#d8d8d8" stroke-width="1.3"/>
<text x="429.20" y="356.85" font-size="14.68" fill="#dcdcdc" text-anchor="end" font-weight="normal" textLength="20.4" lengthAdjust="spacingAndGlyphs" stroke="#dcdcdc" stroke-width="0.25">-30</text>
<line x1="429.50" y1="390.20" x2="434.50" y2="390.20" stroke="#d8d8d8" stroke-width="1.3"/>
<text x="429.20" y="395.20" font-size="14.68" fill="#dcdcdc" text-anchor="end" font-weight="normal" textLength="20.4" lengthAdjust="spacingAndGlyphs" stroke="#dcdcdc" stroke-width="0.25">-40</text>
<line x1="434.50" y1="390.20" x2="434.50" y2="395.70" stroke="#d8d8d8" stroke-width="1.3"/>
<text x="434.50" y="411.00" font-size="14.53" fill="#dcdcdc" text-anchor="middle" font-weight="normal" textLength="7.6" lengthAdjust="spacingAndGlyphs" stroke="#dcdcdc" stroke-width="0.25">0</text>
<line x1="489.97" y1="390.20" x2="489.97" y2="395.70" stroke="#d8d8d8" stroke-width="1.3"/>
<text x="489.97" y="411.00" font-size="14.53" fill="#dcdcdc" text-anchor="middle" font-weight="normal" textLength="15.2" lengthAdjust="spacingAndGlyphs" stroke="#dcdcdc" stroke-width="0.25">10</text>
<line x1="545.44" y1="390.20" x2="545.44" y2="395.70" stroke="#d8d8d8" stroke-width="1.3"/>
<text x="545.44" y="411.00" font-size="14.53" fill="#dcdcdc" text-anchor="middle" font-weight="normal" textLength="15.2" lengthAdjust="spacingAndGlyphs" stroke="#dcdcdc" stroke-width="0.25">20</text>
<line x1="600.91" y1="390.20" x2="600.91" y2="395.70" stroke="#d8d8d8" stroke-width="1.3"/>
<text x="600.91" y="411.00" font-size="14.53" fill="#dcdcdc" text-anchor="middle" font-weight="normal" textLength="15.2" lengthAdjust="spacingAndGlyphs" stroke="#dcdcdc" stroke-width="0.25">30</text>
<line x1="656.38" y1="390.20" x2="656.38" y2="395.70" stroke="#d8d8d8" stroke-width="1.3"/>
<text x="656.38" y="411.00" font-size="14.53" fill="#dcdcdc" text-anchor="middle" font-weight="normal" textLength="15.2" lengthAdjust="spacingAndGlyphs" stroke="#dcdcdc" stroke-width="0.25">40</text>
<line x1="711.85" y1="390.20" x2="711.85" y2="395.70" stroke="#d8d8d8" stroke-width="1.3"/>
<text x="711.85" y="411.00" font-size="14.53" fill="#dcdcdc" text-anchor="middle" font-weight="normal" textLength="15.2" lengthAdjust="spacingAndGlyphs" stroke="#dcdcdc" stroke-width="0.25">50</text>
<line x1="767.32" y1="390.20" x2="767.32" y2="395.70" stroke="#d8d8d8" stroke-width="1.3"/>
<text x="767.32" y="411.00" font-size="14.53" fill="#dcdcdc" text-anchor="middle" font-weight="normal" textLength="15.2" lengthAdjust="spacingAndGlyphs" stroke="#dcdcdc" stroke-width="0.25">60</text>
<line x1="822.79" y1="390.20" x2="822.79" y2="395.70" stroke="#d8d8d8" stroke-width="1.3"/>
<text x="822.79" y="411.00" font-size="14.53" fill="#dcdcdc" text-anchor="middle" font-weight="normal" textLength="15.2" lengthAdjust="spacingAndGlyphs" stroke="#dcdcdc" stroke-width="0.25">70</text>
<line x1="878.26" y1="390.20" x2="878.26" y2="395.70" stroke="#d8d8d8" stroke-width="1.3"/>
<text x="878.26" y="411.00" font-size="14.53" fill="#dcdcdc" text-anchor="middle" font-weight="normal" textLength="15.2" lengthAdjust="spacingAndGlyphs" stroke="#dcdcdc" stroke-width="0.25">80</text>
<line x1="933.73" y1="390.20" x2="933.73" y2="395.70" stroke="#d8d8d8" stroke-width="1.3"/>
<text x="933.73" y="411.00" font-size="14.53" fill="#dcdcdc" text-anchor="middle" font-weight="normal" textLength="15.2" lengthAdjust="spacingAndGlyphs" stroke="#dcdcdc" stroke-width="0.25">90</text>
<line x1="989.20" y1="390.20" x2="989.20" y2="395.70" stroke="#d8d8d8" stroke-width="1.3"/>
<text x="989.20" y="411.00" font-size="14.53" fill="#dcdcdc" text-anchor="middle" font-weight="normal" textLength="22.8" lengthAdjust="spacingAndGlyphs" stroke="#dcdcdc" stroke-width="0.25">100</text>
<clipPath id="cRGB"><rect x="434.5" y="83.4" width="556.7" height="306.79999999999995"/></clipPath>
<g clip-path="url(#cRGB)">
<polyline points="434.50,235.27 462.24,264.80 489.97,277.07 517.71,268.25 545.44,259.04 573.17,250.61 600.91,242.94 628.64,237.18 656.38,235.07 684.12,233.73 711.85,233.35 739.59,231.24 767.32,230.47 795.06,229.51 822.79,228.75 850.52,230.17 878.26,229.51 906.00,229.13 933.73,229.13 961.47,231.97 989.20,231.81" fill="none" stroke="#0a8a0a" stroke-width="3" stroke-linejoin="round"/>
<polyline points="434.50,232.96 462.24,263.26 489.97,276.30 517.71,269.78 545.44,263.64 573.17,255.97 600.91,247.54 628.64,245.05 656.38,241.98 684.12,240.83 711.85,240.83 739.59,239.48 767.32,238.91 795.06,239.29 822.79,238.72 850.52,240.63 878.26,241.02 906.00,240.02 933.73,240.63 961.47,241.02 989.20,241.98" fill="none" stroke="#ee1111" stroke-width="3" stroke-linejoin="round"/>
<polyline points="434.50,232.20 462.24,262.11 489.97,274.00 517.71,265.95 545.44,258.28 573.17,250.61 600.91,242.55 628.64,239.48 656.38,237.18 684.12,235.84 711.85,237.18 739.59,233.73 767.32,234.50 795.06,234.69 822.79,233.35 850.52,232.20 878.26,232.58 906.00,232.58 933.73,232.58 961.47,234.50 989.20,231.43" fill="none" stroke="#1010ee" stroke-width="3" stroke-linejoin="round"/>
</g>
<text x="1057.10" y="77.40" font-size="14.83" fill="#dcdcdc" text-anchor="start" font-weight="normal" textLength="80.3" lengthAdjust="spacingAndGlyphs" stroke="#dcdcdc" stroke-width="0.25">RGB Balance</text>
<rect x="1038.70" y="83.40" width="134.80" height="311.90" fill="#222222"/>
<line x1="1038.70" y1="122.39" x2="1173.50" y2="122.39" stroke="#8a8a8a" stroke-width="1.2"/>
<line x1="1038.70" y1="161.38" x2="1173.50" y2="161.38" stroke="#8a8a8a" stroke-width="1.2"/>
<line x1="1038.70" y1="200.36" x2="1173.50" y2="200.36" stroke="#8a8a8a" stroke-width="1.2"/>
<line x1="1038.70" y1="239.35" x2="1173.50" y2="239.35" stroke="#8a8a8a" stroke-width="1.2"/>
<line x1="1038.70" y1="278.34" x2="1173.50" y2="278.34" stroke="#8a8a8a" stroke-width="1.2"/>
<line x1="1038.70" y1="317.32" x2="1173.50" y2="317.32" stroke="#8a8a8a" stroke-width="1.2"/>
<line x1="1038.70" y1="356.31" x2="1173.50" y2="356.31" stroke="#8a8a8a" stroke-width="1.2"/>
<rect x="1038.7" y="83.4" width="134.79999999999995" height="311.9" fill="none" stroke="#a6a6a6" stroke-width="1.3"/>
<rect x="1038.20" y="81.90" width="135.80" height="1.10" fill="#555555"/>
<line x1="1038.10" y1="81.40" x2="1174.10" y2="81.40" stroke="#a6a6a6" stroke-width="1.1"/>
<line x1="1033.70" y1="83.40" x2="1038.70" y2="83.40" stroke="#d8d8d8" stroke-width="1.3"/>
<text x="1033.40" y="88.40" font-size="14.68" fill="#dcdcdc" text-anchor="end" font-weight="normal" textLength="7.7" lengthAdjust="spacingAndGlyphs" stroke="#dcdcdc" stroke-width="0.25">4</text>
<line x1="1033.70" y1="122.39" x2="1038.70" y2="122.39" stroke="#d8d8d8" stroke-width="1.3"/>
<text x="1033.40" y="127.39" font-size="14.68" fill="#dcdcdc" text-anchor="end" font-weight="normal" textLength="7.7" lengthAdjust="spacingAndGlyphs" stroke="#dcdcdc" stroke-width="0.25">3</text>
<line x1="1033.70" y1="161.38" x2="1038.70" y2="161.38" stroke="#d8d8d8" stroke-width="1.3"/>
<text x="1033.40" y="166.38" font-size="14.68" fill="#dcdcdc" text-anchor="end" font-weight="normal" textLength="7.7" lengthAdjust="spacingAndGlyphs" stroke="#dcdcdc" stroke-width="0.25">2</text>
<line x1="1033.70" y1="200.36" x2="1038.70" y2="200.36" stroke="#d8d8d8" stroke-width="1.3"/>
<text x="1033.40" y="205.36" font-size="14.68" fill="#dcdcdc" text-anchor="end" font-weight="normal" textLength="7.7" lengthAdjust="spacingAndGlyphs" stroke="#dcdcdc" stroke-width="0.25">1</text>
<line x1="1033.70" y1="239.35" x2="1038.70" y2="239.35" stroke="#d8d8d8" stroke-width="1.3"/>
<text x="1033.40" y="244.35" font-size="14.68" fill="#dcdcdc" text-anchor="end" font-weight="normal" textLength="7.7" lengthAdjust="spacingAndGlyphs" stroke="#dcdcdc" stroke-width="0.25">0</text>
<line x1="1033.70" y1="278.34" x2="1038.70" y2="278.34" stroke="#d8d8d8" stroke-width="1.3"/>
<text x="1033.40" y="283.34" font-size="14.68" fill="#dcdcdc" text-anchor="end" font-weight="normal" textLength="12.5" lengthAdjust="spacingAndGlyphs" stroke="#dcdcdc" stroke-width="0.25">-1</text>
<line x1="1033.70" y1="317.32" x2="1038.70" y2="317.32" stroke="#d8d8d8" stroke-width="1.3"/>
<text x="1033.40" y="322.32" font-size="14.68" fill="#dcdcdc" text-anchor="end" font-weight="normal" textLength="12.5" lengthAdjust="spacingAndGlyphs" stroke="#dcdcdc" stroke-width="0.25">-2</text>
<line x1="1033.70" y1="356.31" x2="1038.70" y2="356.31" stroke="#d8d8d8" stroke-width="1.3"/>
<text x="1033.40" y="361.31" font-size="14.68" fill="#dcdcdc" text-anchor="end" font-weight="normal" textLength="12.5" lengthAdjust="spacingAndGlyphs" stroke="#dcdcdc" stroke-width="0.25">-3</text>
<line x1="1033.70" y1="395.30" x2="1038.70" y2="395.30" stroke="#d8d8d8" stroke-width="1.3"/>
<text x="1033.40" y="400.30" font-size="14.68" fill="#dcdcdc" text-anchor="end" font-weight="normal" textLength="12.5" lengthAdjust="spacingAndGlyphs" stroke="#dcdcdc" stroke-width="0.25">-4</text>
<line x1="1038.70" y1="395.30" x2="1038.70" y2="400.30" stroke="#d8d8d8" stroke-width="1.3"/>
<line x1="1173.50" y1="395.30" x2="1173.50" y2="400.30" stroke="#d8d8d8" stroke-width="1.3"/>
<text x="1106.00" y="411.50" font-size="14.53" fill="#dcdcdc" text-anchor="middle" font-weight="normal" textLength="22.5" lengthAdjust="spacingAndGlyphs" stroke="#dcdcdc" stroke-width="0.25">100</text>
<rect x="1052.8" y="239.35" width="33.5" height="67.85" fill="url(#gRed)" stroke="#000" stroke-width="1.2"/>
<rect x="1088.1" y="221.9" width="33.5" height="17.45" fill="url(#gGrn)" stroke="#000" stroke-width="1.2"/>
<rect x="1123.8" y="212.1" width="33.8" height="27.25" fill="url(#gBlu)" stroke="#000" stroke-width="1.2"/>
<text x="1357.70" y="77.40" font-size="14.83" fill="#dcdcdc" text-anchor="start" font-weight="normal" textLength="105.2" lengthAdjust="spacingAndGlyphs" stroke="#dcdcdc" stroke-width="0.25">Gamma Log/Log</text>
<rect x="1230.50" y="83.40" width="383.80" height="306.70" fill="#222222"/>
<line x1="1230.50" y1="144.74" x2="1614.30" y2="144.74" stroke="#8a8a8a" stroke-width="1.2"/>
<line x1="1230.50" y1="206.08" x2="1614.30" y2="206.08" stroke="#8a8a8a" stroke-width="1.2"/>
<line x1="1230.50" y1="267.42" x2="1614.30" y2="267.42" stroke="#8a8a8a" stroke-width="1.2"/>
<line x1="1230.50" y1="328.76" x2="1614.30" y2="328.76" stroke="#8a8a8a" stroke-width="1.2"/>
<rect x="1230.5" y="83.4" width="383.79999999999995" height="306.70000000000005" fill="none" stroke="#a6a6a6" stroke-width="1.3"/>
<rect x="1230.00" y="81.90" width="384.80" height="1.10" fill="#555555"/>
<line x1="1229.90" y1="81.40" x2="1614.90" y2="81.40" stroke="#a6a6a6" stroke-width="1.1"/>
<line x1="1225.50" y1="83.40" x2="1230.50" y2="83.40" stroke="#d8d8d8" stroke-width="1.3"/>
<text x="1225.20" y="88.40" font-size="14.68" fill="#dcdcdc" text-anchor="end" font-weight="normal" textLength="20.0" lengthAdjust="spacingAndGlyphs" stroke="#dcdcdc" stroke-width="0.25">2,8</text>
<line x1="1225.50" y1="144.74" x2="1230.50" y2="144.74" stroke="#d8d8d8" stroke-width="1.3"/>
<text x="1225.20" y="149.74" font-size="14.68" fill="#dcdcdc" text-anchor="end" font-weight="normal" textLength="20.0" lengthAdjust="spacingAndGlyphs" stroke="#dcdcdc" stroke-width="0.25">2,6</text>
<line x1="1225.50" y1="206.08" x2="1230.50" y2="206.08" stroke="#d8d8d8" stroke-width="1.3"/>
<text x="1225.20" y="211.08" font-size="14.68" fill="#dcdcdc" text-anchor="end" font-weight="normal" textLength="20.0" lengthAdjust="spacingAndGlyphs" stroke="#dcdcdc" stroke-width="0.25">2,4</text>
<line x1="1225.50" y1="267.42" x2="1230.50" y2="267.42" stroke="#d8d8d8" stroke-width="1.3"/>
<text x="1225.20" y="272.42" font-size="14.68" fill="#dcdcdc" text-anchor="end" font-weight="normal" textLength="20.0" lengthAdjust="spacingAndGlyphs" stroke="#dcdcdc" stroke-width="0.25">2,2</text>
<line x1="1225.50" y1="328.76" x2="1230.50" y2="328.76" stroke="#d8d8d8" stroke-width="1.3"/>
<text x="1225.20" y="333.76" font-size="14.68" fill="#dcdcdc" text-anchor="end" font-weight="normal" textLength="7.7" lengthAdjust="spacingAndGlyphs" stroke="#dcdcdc" stroke-width="0.25">2</text>
<line x1="1225.50" y1="390.10" x2="1230.50" y2="390.10" stroke="#d8d8d8" stroke-width="1.3"/>
<text x="1225.20" y="395.10" font-size="14.68" fill="#dcdcdc" text-anchor="end" font-weight="normal" textLength="20.0" lengthAdjust="spacingAndGlyphs" stroke="#dcdcdc" stroke-width="0.25">1,8</text>
<line x1="1230.50" y1="390.10" x2="1230.50" y2="395.60" stroke="#d8d8d8" stroke-width="1.3"/>
<text x="1230.50" y="411.00" font-size="14.53" fill="#dcdcdc" text-anchor="middle" font-weight="normal" textLength="7.6" lengthAdjust="spacingAndGlyphs" stroke="#dcdcdc" stroke-width="0.25">0</text>
<line x1="1307.26" y1="390.10" x2="1307.26" y2="395.60" stroke="#d8d8d8" stroke-width="1.3"/>
<text x="1307.26" y="411.00" font-size="14.53" fill="#dcdcdc" text-anchor="middle" font-weight="normal" textLength="15.2" lengthAdjust="spacingAndGlyphs" stroke="#dcdcdc" stroke-width="0.25">20</text>
<line x1="1384.02" y1="390.10" x2="1384.02" y2="395.60" stroke="#d8d8d8" stroke-width="1.3"/>
<text x="1384.02" y="411.00" font-size="14.53" fill="#dcdcdc" text-anchor="middle" font-weight="normal" textLength="15.2" lengthAdjust="spacingAndGlyphs" stroke="#dcdcdc" stroke-width="0.25">40</text>
<line x1="1460.78" y1="390.10" x2="1460.78" y2="395.60" stroke="#d8d8d8" stroke-width="1.3"/>
<text x="1460.78" y="411.00" font-size="14.53" fill="#dcdcdc" text-anchor="middle" font-weight="normal" textLength="15.2" lengthAdjust="spacingAndGlyphs" stroke="#dcdcdc" stroke-width="0.25">60</text>
<line x1="1537.54" y1="390.10" x2="1537.54" y2="395.60" stroke="#d8d8d8" stroke-width="1.3"/>
<text x="1537.54" y="411.00" font-size="14.53" fill="#dcdcdc" text-anchor="middle" font-weight="normal" textLength="15.2" lengthAdjust="spacingAndGlyphs" stroke="#dcdcdc" stroke-width="0.25">80</text>
<line x1="1614.30" y1="390.10" x2="1614.30" y2="395.60" stroke="#d8d8d8" stroke-width="1.3"/>
<text x="1614.30" y="411.00" font-size="14.53" fill="#dcdcdc" text-anchor="middle" font-weight="normal" textLength="22.8" lengthAdjust="spacingAndGlyphs" stroke="#dcdcdc" stroke-width="0.25">100</text>
<clipPath id="cGam"><rect x="1230.5" y="83.4" width="385.79999999999995" height="306.70000000000005"/></clipPath>
<g clip-path="url(#cGam)">
<polyline points="1230.50,550.26 1249.69,258.53 1268.88,260.83 1288.07,264.05 1307.26,260.83 1326.45,260.06 1345.64,263.43 1364.83,262.21 1384.02,260.67 1403.21,258.53 1422.40,257.30 1441.59,256.38 1460.78,256.07 1479.97,256.38 1499.16,258.22 1518.35,252.09 1537.54,253.93 1556.73,258.53 1575.92,263.43 1595.11,250.55 1614.30,241.96" fill="none" stroke="#8e8e8e" stroke-width="2.6" stroke-linejoin="round"/>
<polyline points="1242.01,408.81 1243.93,397.77 1245.85,388.17 1247.77,379.73 1249.69,372.23 1251.61,365.53 1253.53,359.50 1255.45,354.03 1257.37,349.05 1259.29,344.49 1261.20,340.29 1263.12,336.42 1265.04,332.83 1266.96,329.50 1268.88,326.39 1270.80,323.48 1272.72,320.76 1274.64,318.20 1276.56,315.78 1278.47,313.51 1280.39,311.36 1282.31,309.32 1284.23,307.39 1286.15,305.55 1288.07,303.80 1289.99,302.14 1291.91,300.55 1293.83,299.03 1295.75,297.57 1297.66,296.18 1299.58,294.85 1301.50,293.57 1303.42,292.33 1305.34,291.15 1307.26,290.01 1314.94,285.85 1322.61,282.23 1330.29,279.04 1337.96,276.21 1345.64,273.67 1353.32,271.39 1360.99,269.31 1368.67,267.42 1376.34,265.69 1384.02,264.10 1391.70,262.63 1399.37,261.27 1407.05,260.00 1414.72,258.82 1422.40,257.72 1430.08,256.68 1437.75,255.70 1445.43,254.79 1453.10,253.92 1460.78,253.10 1468.46,252.33 1476.13,251.59 1483.81,250.89 1491.48,250.22 1499.16,249.59 1506.84,248.98 1514.51,248.41 1522.19,247.85 1529.86,247.32 1537.54,246.81 1545.22,246.32 1552.89,245.85 1560.57,245.40 1568.24,244.97 1575.92,244.55 1583.60,244.15 1591.27,243.76 1598.95,243.38 1606.62,243.02 1614.30,242.67 1614.30,242.67" fill="none" stroke="#ffff1a" stroke-width="2.8" stroke-linejoin="round"/>
</g>
<text x="110.40" y="451.10" font-size="27.91" fill="#f0f0f0" text-anchor="start" font-weight="normal" textLength="207.8" lengthAdjust="spacingAndGlyphs" stroke="#f0f0f0" stroke-width="0.45">Avg dE2000: 1,3</text>
<text x="508.00" y="451.10" font-size="27.91" fill="#f0f0f0" text-anchor="start" font-weight="normal" textLength="184.1" lengthAdjust="spacingAndGlyphs" stroke="#f0f0f0" stroke-width="0.45">Avg CCT: 6624</text>
<text x="871.10" y="451.10" font-size="27.91" fill="#f0f0f0" text-anchor="start" font-weight="normal" textLength="265.9" lengthAdjust="spacingAndGlyphs" stroke="#f0f0f0" stroke-width="0.45">Contrast Ratio: 7417</text>
<text x="1257.30" y="451.10" font-size="27.91" fill="#f0f0f0" text-anchor="start" font-weight="normal" textLength="303.9" lengthAdjust="spacingAndGlyphs" stroke="#f0f0f0" stroke-width="0.45">Average Gamma: 2,223</text>
<rect x="27.80" y="470.20" width="1612.50" height="126.60" fill="#000000"/>
<line x1="119.30" y1="470.20" x2="119.30" y2="596.80" stroke="#1a1a1a" stroke-width="1"/>
<line x1="1627.80" y1="470.20" x2="1627.80" y2="596.80" stroke="#141414" stroke-width="1"/>
<rect x="137.00" y="476.00" width="61.00" height="49.00" fill="rgb(0,0,0)" shape-rendering="crispEdges"/>
<rect x="137.00" y="525.00" width="61.00" height="50.00" fill="rgb(0,0,0)" shape-rendering="crispEdges"/>
<rect x="137.5" y="476.5" width="60" height="98" fill="none" stroke="#ffffff" stroke-width="1"/>
<text x="167.80" y="588.80" font-size="10.76" fill="#f4f4f4" text-anchor="middle" font-weight="normal" textLength="6.2" lengthAdjust="spacingAndGlyphs" stroke="#f4f4f4" stroke-width="0.35">0</text>
<rect x="208.00" y="476.00" width="61.00" height="49.00" fill="rgb(8,8,8)" shape-rendering="crispEdges"/>
<rect x="208.00" y="525.00" width="61.00" height="50.00" fill="rgb(13,13,13)" shape-rendering="crispEdges"/>
<rect x="208.5" y="476.5" width="60" height="98" fill="none" stroke="#ffffff" stroke-width="1"/>
<text x="238.94" y="588.80" font-size="10.76" fill="#f4f4f4" text-anchor="middle" font-weight="normal" textLength="6.2" lengthAdjust="spacingAndGlyphs" stroke="#f4f4f4" stroke-width="0.35">5</text>
<rect x="280.00" y="476.00" width="61.00" height="49.00" fill="rgb(20,20,20)" shape-rendering="crispEdges"/>
<rect x="280.00" y="525.00" width="61.00" height="50.00" fill="rgb(26,26,26)" shape-rendering="crispEdges"/>
<rect x="280.5" y="476.5" width="60" height="98" fill="none" stroke="#ffffff" stroke-width="1"/>
<text x="310.08" y="588.80" font-size="10.76" fill="#f4f4f4" text-anchor="middle" font-weight="normal" textLength="12.1" lengthAdjust="spacingAndGlyphs" stroke="#f4f4f4" stroke-width="0.35">10</text>
<rect x="351.00" y="476.00" width="61.00" height="49.00" fill="rgb(34,34,34)" shape-rendering="crispEdges"/>
<rect x="351.00" y="525.00" width="61.00" height="50.00" fill="rgb(38,38,38)" shape-rendering="crispEdges"/>
<rect x="351.5" y="476.5" width="60" height="98" fill="none" stroke="#ffffff" stroke-width="1"/>
<text x="381.22" y="588.80" font-size="10.76" fill="#f4f4f4" text-anchor="middle" font-weight="normal" textLength="12.1" lengthAdjust="spacingAndGlyphs" stroke="#f4f4f4" stroke-width="0.35">15</text>
<rect x="422.00" y="476.00" width="61.00" height="49.00" fill="rgb(47,47,47)" shape-rendering="crispEdges"/>
<rect x="422.00" y="525.00" width="61.00" height="50.00" fill="rgb(51,51,51)" shape-rendering="crispEdges"/>
<rect x="422.5" y="476.5" width="60" height="98" fill="none" stroke="#ffffff" stroke-width="1"/>
<text x="452.36" y="588.80" font-size="10.76" fill="#f4f4f4" text-anchor="middle" font-weight="normal" textLength="12.1" lengthAdjust="spacingAndGlyphs" stroke="#f4f4f4" stroke-width="0.35">20</text>
<rect x="493.00" y="476.00" width="61.00" height="49.00" fill="rgb(61,61,61)" shape-rendering="crispEdges"/>
<rect x="493.00" y="525.00" width="61.00" height="50.00" fill="rgb(64,64,64)" shape-rendering="crispEdges"/>
<rect x="493.5" y="476.5" width="60" height="98" fill="none" stroke="#ffffff" stroke-width="1"/>
<text x="523.50" y="588.80" font-size="10.76" fill="#f4f4f4" text-anchor="middle" font-weight="normal" textLength="12.1" lengthAdjust="spacingAndGlyphs" stroke="#f4f4f4" stroke-width="0.35">25</text>
<rect x="564.00" y="476.00" width="61.00" height="49.00" fill="rgb(75,75,75)" shape-rendering="crispEdges"/>
<rect x="564.00" y="525.00" width="61.00" height="50.00" fill="rgb(76,76,76)" shape-rendering="crispEdges"/>
<rect x="564.5" y="476.5" width="60" height="98" fill="none" stroke="#ffffff" stroke-width="1"/>
<text x="594.64" y="588.80" font-size="10.76" fill="#f4f4f4" text-anchor="middle" font-weight="normal" textLength="12.1" lengthAdjust="spacingAndGlyphs" stroke="#f4f4f4" stroke-width="0.35">30</text>
<rect x="635.00" y="476.00" width="61.00" height="49.00" fill="rgb(88,88,88)" shape-rendering="crispEdges"/>
<rect x="635.00" y="525.00" width="61.00" height="50.00" fill="rgb(89,89,89)" shape-rendering="crispEdges"/>
<rect x="635.5" y="476.5" width="60" height="98" fill="none" stroke="#ffffff" stroke-width="1"/>
<text x="665.78" y="588.80" font-size="10.76" fill="#f4f4f4" text-anchor="middle" font-weight="normal" textLength="12.1" lengthAdjust="spacingAndGlyphs" stroke="#f4f4f4" stroke-width="0.35">35</text>
<rect x="706.00" y="476.00" width="61.00" height="49.00" fill="rgb(101,101,101)" shape-rendering="crispEdges"/>
<rect x="706.00" y="525.00" width="61.00" height="50.00" fill="rgb(102,102,102)" shape-rendering="crispEdges"/>
<rect x="706.5" y="476.5" width="60" height="98" fill="none" stroke="#ffffff" stroke-width="1"/>
<text x="736.92" y="588.80" font-size="10.76" fill="#f4f4f4" text-anchor="middle" font-weight="normal" textLength="12.1" lengthAdjust="spacingAndGlyphs" stroke="#f4f4f4" stroke-width="0.35">40</text>
<rect x="778.00" y="476.00" width="61.00" height="49.00" fill="rgb(114,114,114)" shape-rendering="crispEdges"/>
<rect x="778.00" y="525.00" width="61.00" height="50.00" fill="rgb(115,115,115)" shape-rendering="crispEdges"/>
<rect x="778.5" y="476.5" width="60" height="98" fill="none" stroke="#ffffff" stroke-width="1"/>
<text x="808.06" y="588.80" font-size="10.76" fill="#f4f4f4" text-anchor="middle" font-weight="normal" textLength="12.1" lengthAdjust="spacingAndGlyphs" stroke="#f4f4f4" stroke-width="0.35">45</text>
<rect x="849.00" y="476.00" width="61.00" height="49.00" fill="rgb(127,127,127)" shape-rendering="crispEdges"/>
<rect x="849.00" y="525.00" width="61.00" height="50.00" fill="rgb(128,128,128)" shape-rendering="crispEdges"/>
<rect x="849.5" y="476.5" width="60" height="98" fill="none" stroke="#ffffff" stroke-width="1"/>
<text x="879.20" y="588.80" font-size="10.76" fill="#f4f4f4" text-anchor="middle" font-weight="normal" textLength="12.1" lengthAdjust="spacingAndGlyphs" stroke="#f4f4f4" stroke-width="0.35">50</text>
<rect x="920.00" y="476.00" width="61.00" height="49.00" fill="rgb(140,140,140)" shape-rendering="crispEdges"/>
<rect x="920.00" y="525.00" width="61.00" height="50.00" fill="rgb(140,140,140)" shape-rendering="crispEdges"/>
<rect x="920.5" y="476.5" width="60" height="98" fill="none" stroke="#ffffff" stroke-width="1"/>
<text x="950.34" y="588.80" font-size="10.76" fill="#f4f4f4" text-anchor="middle" font-weight="normal" textLength="12.1" lengthAdjust="spacingAndGlyphs" stroke="#f4f4f4" stroke-width="0.35">55</text>
<rect x="991.00" y="476.00" width="61.00" height="49.00" fill="rgb(153,153,153)" shape-rendering="crispEdges"/>
<rect x="991.00" y="525.00" width="61.00" height="50.00" fill="rgb(153,153,153)" shape-rendering="crispEdges"/>
<rect x="991.5" y="476.5" width="60" height="98" fill="none" stroke="#ffffff" stroke-width="1"/>
<text x="1021.48" y="588.80" font-size="10.76" fill="#f4f4f4" text-anchor="middle" font-weight="normal" textLength="12.1" lengthAdjust="spacingAndGlyphs" stroke="#f4f4f4" stroke-width="0.35">60</text>
<rect x="1062.00" y="476.00" width="61.00" height="49.00" fill="rgb(166,166,166)" shape-rendering="crispEdges"/>
<rect x="1062.00" y="525.00" width="61.00" height="50.00" fill="rgb(166,166,166)" shape-rendering="crispEdges"/>
<rect x="1062.5" y="476.5" width="60" height="98" fill="none" stroke="#ffffff" stroke-width="1"/>
<text x="1092.62" y="588.80" font-size="10.76" fill="#f4f4f4" text-anchor="middle" font-weight="normal" textLength="12.1" lengthAdjust="spacingAndGlyphs" stroke="#f4f4f4" stroke-width="0.35">65</text>
<rect x="1133.00" y="476.00" width="61.00" height="49.00" fill="rgb(178,178,178)" shape-rendering="crispEdges"/>
<rect x="1133.00" y="525.00" width="61.00" height="50.00" fill="rgb(178,178,178)" shape-rendering="crispEdges"/>
<rect x="1133.5" y="476.5" width="60" height="98" fill="none" stroke="#ffffff" stroke-width="1"/>
<rect x="1134.5" y="477.5" width="58" height="96" fill="none" stroke="rgb(195,195,195)" stroke-width="1"/>
<text x="1163.76" y="588.80" font-size="10.76" fill="#f4f4f4" text-anchor="middle" font-weight="normal" textLength="12.1" lengthAdjust="spacingAndGlyphs" stroke="#f4f4f4" stroke-width="0.35">70</text>
<rect x="1204.00" y="476.00" width="61.00" height="49.00" fill="rgb(191,191,191)" shape-rendering="crispEdges"/>
<rect x="1204.00" y="525.00" width="61.00" height="50.00" fill="rgb(191,191,191)" shape-rendering="crispEdges"/>
<rect x="1204.5" y="476.5" width="60" height="98" fill="none" stroke="#ffffff" stroke-width="1"/>
<rect x="1205.5" y="477.5" width="58" height="96" fill="none" stroke="rgb(195,195,195)" stroke-width="1"/>
<text x="1234.90" y="588.80" font-size="10.76" fill="#f4f4f4" text-anchor="middle" font-weight="normal" textLength="12.1" lengthAdjust="spacingAndGlyphs" stroke="#f4f4f4" stroke-width="0.35">75</text>
<rect x="1276.00" y="476.00" width="61.00" height="49.00" fill="rgb(204,204,204)" shape-rendering="crispEdges"/>
<rect x="1276.00" y="525.00" width="61.00" height="50.00" fill="rgb(204,204,204)" shape-rendering="crispEdges"/>
<rect x="1276.5" y="476.5" width="60" height="98" fill="none" stroke="#ffffff" stroke-width="1"/>
<rect x="1277.5" y="477.5" width="58" height="96" fill="none" stroke="rgb(195,195,195)" stroke-width="1"/>
<text x="1306.04" y="588.80" font-size="10.76" fill="#f4f4f4" text-anchor="middle" font-weight="normal" textLength="12.1" lengthAdjust="spacingAndGlyphs" stroke="#f4f4f4" stroke-width="0.35">80</text>
<rect x="1347.00" y="476.00" width="61.00" height="49.00" fill="rgb(217,217,217)" shape-rendering="crispEdges"/>
<rect x="1347.00" y="525.00" width="61.00" height="50.00" fill="rgb(217,217,217)" shape-rendering="crispEdges"/>
<rect x="1347.5" y="476.5" width="60" height="98" fill="none" stroke="#ffffff" stroke-width="1"/>
<rect x="1348.5" y="477.5" width="58" height="96" fill="none" stroke="rgb(195,195,195)" stroke-width="1"/>
<text x="1377.18" y="588.80" font-size="10.76" fill="#f4f4f4" text-anchor="middle" font-weight="normal" textLength="12.1" lengthAdjust="spacingAndGlyphs" stroke="#f4f4f4" stroke-width="0.35">85</text>
<rect x="1418.00" y="476.00" width="61.00" height="49.00" fill="rgb(230,230,230)" shape-rendering="crispEdges"/>
<rect x="1418.00" y="525.00" width="61.00" height="50.00" fill="rgb(230,230,230)" shape-rendering="crispEdges"/>
<rect x="1418.5" y="476.5" width="60" height="98" fill="none" stroke="#ffffff" stroke-width="1"/>
<rect x="1419.5" y="477.5" width="58" height="96" fill="none" stroke="rgb(195,195,195)" stroke-width="1"/>
<text x="1448.32" y="588.80" font-size="10.76" fill="#f4f4f4" text-anchor="middle" font-weight="normal" textLength="12.1" lengthAdjust="spacingAndGlyphs" stroke="#f4f4f4" stroke-width="0.35">90</text>
<rect x="1489.00" y="476.00" width="61.00" height="49.00" fill="rgb(242,242,242)" shape-rendering="crispEdges"/>
<rect x="1489.00" y="525.00" width="61.00" height="50.00" fill="rgb(242,242,242)" shape-rendering="crispEdges"/>
<rect x="1489.5" y="476.5" width="60" height="98" fill="none" stroke="#ffffff" stroke-width="1"/>
<rect x="1490.5" y="477.5" width="58" height="96" fill="none" stroke="rgb(195,195,195)" stroke-width="1"/>
<text x="1519.46" y="588.80" font-size="10.76" fill="#f4f4f4" text-anchor="middle" font-weight="normal" textLength="12.1" lengthAdjust="spacingAndGlyphs" stroke="#f4f4f4" stroke-width="0.35">95</text>
<rect x="1560.00" y="476.00" width="61.00" height="49.00" fill="rgb(255,255,255)" shape-rendering="crispEdges"/>
<rect x="1560.00" y="525.00" width="61.00" height="50.00" fill="rgb(255,255,255)" shape-rendering="crispEdges"/>
<rect x="1560.5" y="476.5" width="60" height="98" fill="none" stroke="#ffffff" stroke-width="1"/>
<rect x="1561.5" y="477.5" width="58" height="96" fill="none" stroke="rgb(195,195,195)" stroke-width="1"/>
<text x="1590.60" y="588.80" font-size="10.76" fill="#f4f4f4" text-anchor="middle" font-weight="normal" textLength="18.0" lengthAdjust="spacingAndGlyphs" stroke="#f4f4f4" stroke-width="0.35">100</text>
<text transform="translate(132.6,514) rotate(-90)" font-size="12.6" fill="#e8e8e8" stroke="#e8e8e8" stroke-width="0.35" textLength="33.7" lengthAdjust="spacingAndGlyphs">Actual</text>
<text transform="translate(132.6,570.2) rotate(-90)" font-size="12.6" fill="#e8e8e8" stroke="#e8e8e8" stroke-width="0.35" textLength="34.4" lengthAdjust="spacingAndGlyphs">Target</text>
<text x="48.20" y="661.90" font-size="26.89" fill="#f0f0f0" text-anchor="start" font-weight="normal" textLength="211.0" lengthAdjust="spacingAndGlyphs" stroke="#f0f0f0" stroke-width="0.45">Current Reading</text>
<text x="48.20" y="702.60" font-size="23.26" fill="#f0f0f0" text-anchor="start" font-weight="normal" textLength="97.8" lengthAdjust="spacingAndGlyphs" stroke="#f0f0f0" stroke-width="0.45">x: 0,3113</text>
<text x="193.20" y="702.60" font-size="23.26" fill="#f0f0f0" text-anchor="start" font-weight="normal" textLength="98.2" lengthAdjust="spacingAndGlyphs" stroke="#f0f0f0" stroke-width="0.45">y: 0,3287</text>
<text x="47.60" y="735.50" font-size="23.26" fill="#f0f0f0" text-anchor="start" font-weight="normal" textLength="107.1" lengthAdjust="spacingAndGlyphs" stroke="#f0f0f0" stroke-width="0.45">u': 0,1969</text>
<text x="192.20" y="735.50" font-size="23.26" fill="#f0f0f0" text-anchor="start" font-weight="normal" textLength="92.0" lengthAdjust="spacingAndGlyphs" stroke="#f0f0f0" stroke-width="0.45">v': 0,468</text>
<text x="47.60" y="768.60" font-size="23.26" fill="#f0f0f0" text-anchor="start" font-weight="normal" textLength="181.4" lengthAdjust="spacingAndGlyphs" stroke="#f0f0f0" stroke-width="0.45">cd/m²: 489,1504</text>
<text x="47.60" y="801.90" font-size="23.26" fill="#f0f0f0" text-anchor="start" font-weight="normal" textLength="148.8" lengthAdjust="spacingAndGlyphs" stroke="#f0f0f0" stroke-width="0.45">ΔE 2000: 1,01</text>
<text x="449.30" y="629.20" font-size="14.53" fill="#dcdcdc" text-anchor="start" font-weight="normal" textLength="72.5" lengthAdjust="spacingAndGlyphs" stroke="#dcdcdc" stroke-width="0.25">CIE 1931 xy</text>
<clipPath id="cCIE"><rect x="379.2" y="633.3" width="245.00000000000006" height="161.20000000000005"/></clipPath>
<g clip-path="url(#cCIE)">
<rect x="379.20" y="632.80" width="245.00" height="4.00" fill="url(#gC0)" shape-rendering="crispEdges"/>
<rect x="379.20" y="635.80" width="245.00" height="4.00" fill="url(#gC1)" shape-rendering="crispEdges"/>
<rect x="379.20" y="638.80" width="245.00" height="4.00" fill="url(#gC2)" shape-rendering="crispEdges"/>
<rect x="379.20" y="641.80" width="245.00" height="4.00" fill="url(#gC3)" shape-rendering="crispEdges"/>
<rect x="379.20" y="644.80" width="245.00" height="4.00" fill="url(#gC4)" shape-rendering="crispEdges"/>
<rect x="379.20" y="647.80" width="245.00" height="4.00" fill="url(#gC5)" shape-rendering="crispEdges"/>
<rect x="379.20" y="650.80" width="245.00" height="4.00" fill="url(#gC6)" shape-rendering="crispEdges"/>
<rect x="379.20" y="653.80" width="245.00" height="4.00" fill="url(#gC7)" shape-rendering="crispEdges"/>
<rect x="379.20" y="656.80" width="245.00" height="4.00" fill="url(#gC8)" shape-rendering="crispEdges"/>
<rect x="379.20" y="659.80" width="245.00" height="4.00" fill="url(#gC9)" shape-rendering="crispEdges"/>
<rect x="379.20" y="662.80" width="245.00" height="4.00" fill="url(#gC10)" shape-rendering="crispEdges"/>
<rect x="379.20" y="665.80" width="245.00" height="4.00" fill="url(#gC11)" shape-rendering="crispEdges"/>
<rect x="379.20" y="668.80" width="245.00" height="4.00" fill="url(#gC12)" shape-rendering="crispEdges"/>
<rect x="379.20" y="671.80" width="245.00" height="4.00" fill="url(#gC13)" shape-rendering="crispEdges"/>
<rect x="379.20" y="674.80" width="245.00" height="4.00" fill="url(#gC14)" shape-rendering="crispEdges"/>
<rect x="379.20" y="677.80" width="245.00" height="4.00" fill="url(#gC15)" shape-rendering="crispEdges"/>
<rect x="379.20" y="680.80" width="245.00" height="4.00" fill="url(#gC16)" shape-rendering="crispEdges"/>
<rect x="379.20" y="683.80" width="245.00" height="4.00" fill="url(#gC17)" shape-rendering="crispEdges"/>
<rect x="379.20" y="686.80" width="245.00" height="4.00" fill="url(#gC18)" shape-rendering="crispEdges"/>
<rect x="379.20" y="689.80" width="245.00" height="4.00" fill="url(#gC19)" shape-rendering="crispEdges"/>
<rect x="379.20" y="692.80" width="245.00" height="4.00" fill="url(#gC20)" shape-rendering="crispEdges"/>
<rect x="379.20" y="695.80" width="245.00" height="4.00" fill="url(#gC21)" shape-rendering="crispEdges"/>
<rect x="379.20" y="698.80" width="245.00" height="4.00" fill="url(#gC22)" shape-rendering="crispEdges"/>
<rect x="379.20" y="701.80" width="245.00" height="4.00" fill="url(#gC23)" shape-rendering="crispEdges"/>
<rect x="379.20" y="704.80" width="245.00" height="4.00" fill="url(#gC24)" shape-rendering="crispEdges"/>
<rect x="379.20" y="707.80" width="245.00" height="4.00" fill="url(#gC25)" shape-rendering="crispEdges"/>
<rect x="379.20" y="710.80" width="245.00" height="4.00" fill="url(#gC26)" shape-rendering="crispEdges"/>
<rect x="379.20" y="713.80" width="245.00" height="4.00" fill="url(#gC27)" shape-rendering="crispEdges"/>
<rect x="379.20" y="716.80" width="245.00" height="4.00" fill="url(#gC28)" shape-rendering="crispEdges"/>
<rect x="379.20" y="719.80" width="245.00" height="4.00" fill="url(#gC29)" shape-rendering="crispEdges"/>
<rect x="379.20" y="722.80" width="245.00" height="4.00" fill="url(#gC30)" shape-rendering="crispEdges"/>
<rect x="379.20" y="725.80" width="245.00" height="4.00" fill="url(#gC31)" shape-rendering="crispEdges"/>
<rect x="379.20" y="728.80" width="245.00" height="4.00" fill="url(#gC32)" shape-rendering="crispEdges"/>
<rect x="379.20" y="731.80" width="245.00" height="4.00" fill="url(#gC33)" shape-rendering="crispEdges"/>
<rect x="379.20" y="734.80" width="245.00" height="4.00" fill="url(#gC34)" shape-rendering="crispEdges"/>
<rect x="379.20" y="737.80" width="245.00" height="4.00" fill="url(#gC35)" shape-rendering="crispEdges"/>
<rect x="379.20" y="740.80" width="245.00" height="4.00" fill="url(#gC36)" shape-rendering="crispEdges"/>
<rect x="379.20" y="743.80" width="245.00" height="4.00" fill="url(#gC37)" shape-rendering="crispEdges"/>
<rect x="379.20" y="746.80" width="245.00" height="4.00" fill="url(#gC38)" shape-rendering="crispEdges"/>
<rect x="379.20" y="749.80" width="245.00" height="4.00" fill="url(#gC39)" shape-rendering="crispEdges"/>
<rect x="379.20" y="752.80" width="245.00" height="4.00" fill="url(#gC40)" shape-rendering="crispEdges"/>
<rect x="379.20" y="755.80" width="245.00" height="4.00" fill="url(#gC41)" shape-rendering="crispEdges"/>
<rect x="379.20" y="758.80" width="245.00" height="4.00" fill="url(#gC42)" shape-rendering="crispEdges"/>
<rect x="379.20" y="761.80" width="245.00" height="4.00" fill="url(#gC43)" shape-rendering="crispEdges"/>
<rect x="379.20" y="764.80" width="245.00" height="4.00" fill="url(#gC44)" shape-rendering="crispEdges"/>
<rect x="379.20" y="767.80" width="245.00" height="4.00" fill="url(#gC45)" shape-rendering="crispEdges"/>
<rect x="379.20" y="770.80" width="245.00" height="4.00" fill="url(#gC46)" shape-rendering="crispEdges"/>
<rect x="379.20" y="773.80" width="245.00" height="4.00" fill="url(#gC47)" shape-rendering="crispEdges"/>
<rect x="379.20" y="776.80" width="245.00" height="4.00" fill="url(#gC48)" shape-rendering="crispEdges"/>
<rect x="379.20" y="779.80" width="245.00" height="4.00" fill="url(#gC49)" shape-rendering="crispEdges"/>
<rect x="379.20" y="782.80" width="245.00" height="4.00" fill="url(#gC50)" shape-rendering="crispEdges"/>
<rect x="379.20" y="785.80" width="245.00" height="4.00" fill="url(#gC51)" shape-rendering="crispEdges"/>
<rect x="379.20" y="788.80" width="245.00" height="4.00" fill="url(#gC52)" shape-rendering="crispEdges"/>
<rect x="379.20" y="791.80" width="245.00" height="4.00" fill="url(#gC53)" shape-rendering="crispEdges"/>
<line x1="409.70" y1="794.50" x2="625.00" y2="658.30" stroke="#000000" stroke-width="2.6"/>
<circle cx="439.2" cy="761.3" r="4.4" fill="#000"/>
<circle cx="490.4" cy="720.3" r="4.3" fill="#111"/>
<circle cx="486.8" cy="711.8" r="4.3" fill="#2a2a2a" stroke="#000" stroke-width="0.8"/>
<circle cx="489.3" cy="710.8" r="4.3" fill="#333" stroke="#111" stroke-width="0.8"/>
<circle cx="491.8" cy="709.3" r="4.3" fill="#4a4a4a" stroke="#111" stroke-width="0.8"/>
<circle cx="494.3" cy="708" r="4.3" fill="#6a6a6a" stroke="#222" stroke-width="0.8"/>
<circle cx="496.8" cy="706.9" r="4.3" fill="#8a8a8a" stroke="#222" stroke-width="0.8"/>
<circle cx="492.5" cy="713" r="4.2" fill="#bdbdbd" stroke="#222" stroke-width="0.8"/>
<circle cx="494.2" cy="714.4" r="4.1" fill="#ffffff" stroke="#333" stroke-width="0.8"/>
<rect x="494.7" y="707.7" width="12" height="10.6" fill="none" stroke="#000" stroke-width="2"/>
</g>
<rect x="379.2" y="633.3" width="245.00000000000006" height="161.20000000000005" fill="none" stroke="#9a9a9a" stroke-width="1.4"/>
<line x1="390.40" y1="794.50" x2="390.40" y2="800.00" stroke="#d8d8d8" stroke-width="1.3"/>
<text x="390.40" y="815.40" font-size="14.53" fill="#dcdcdc" text-anchor="middle" font-weight="normal" textLength="27.5" lengthAdjust="spacingAndGlyphs" stroke="#dcdcdc" stroke-width="0.25">0,29</text>
<line x1="439.20" y1="794.50" x2="439.20" y2="800.00" stroke="#d8d8d8" stroke-width="1.3"/>
<text x="439.20" y="815.40" font-size="14.53" fill="#dcdcdc" text-anchor="middle" font-weight="normal" textLength="19.5" lengthAdjust="spacingAndGlyphs" stroke="#dcdcdc" stroke-width="0.25">0,3</text>
<line x1="488.20" y1="794.50" x2="488.20" y2="800.00" stroke="#d8d8d8" stroke-width="1.3"/>
<text x="488.20" y="815.40" font-size="14.53" fill="#dcdcdc" text-anchor="middle" font-weight="normal" textLength="27.5" lengthAdjust="spacingAndGlyphs" stroke="#dcdcdc" stroke-width="0.25">0,31</text>
<line x1="537.00" y1="794.50" x2="537.00" y2="800.00" stroke="#d8d8d8" stroke-width="1.3"/>
<text x="537.00" y="815.40" font-size="14.53" fill="#dcdcdc" text-anchor="middle" font-weight="normal" textLength="27.5" lengthAdjust="spacingAndGlyphs" stroke="#dcdcdc" stroke-width="0.25">0,32</text>
<line x1="585.50" y1="794.50" x2="585.50" y2="800.00" stroke="#d8d8d8" stroke-width="1.3"/>
<text x="585.50" y="815.40" font-size="14.53" fill="#dcdcdc" text-anchor="middle" font-weight="normal" textLength="27.5" lengthAdjust="spacingAndGlyphs" stroke="#dcdcdc" stroke-width="0.25">0,33</text>
<line x1="373.70" y1="680.10" x2="379.20" y2="680.10" stroke="#d8d8d8" stroke-width="1.3"/>
<text x="373.60" y="684.40" font-size="14.53" fill="#dcdcdc" text-anchor="end" font-weight="normal" textLength="28.0" lengthAdjust="spacingAndGlyphs" stroke="#dcdcdc" stroke-width="0.25">0,34</text>
<line x1="373.70" y1="744.00" x2="379.20" y2="744.00" stroke="#d8d8d8" stroke-width="1.3"/>
<text x="373.60" y="748.30" font-size="14.53" fill="#dcdcdc" text-anchor="end" font-weight="normal" textLength="28.0" lengthAdjust="spacingAndGlyphs" stroke="#dcdcdc" stroke-width="0.25">0,32</text>
<rect x="635.10" y="606.00" width="13.00" height="26.60" fill="#000000"/>
<rect x="648.10" y="606.00" width="984.10" height="26.60" fill="url(#gHdr)"/>
<clipPath id="cTbl"><rect x="648.1" y="606.0" width="984.1" height="203.65"/></clipPath>
<g clip-path="url(#cTbl)">
<text x="777.40" y="624.90" font-size="14.39" fill="#f4f4f4" text-anchor="start" font-weight="bold" textLength="8.2" lengthAdjust="spacingAndGlyphs">0</text>
<text x="866.70" y="624.90" font-size="14.39" fill="#f4f4f4" text-anchor="start" font-weight="bold" textLength="8.2" lengthAdjust="spacingAndGlyphs">5</text>
<text x="947.40" y="624.90" font-size="14.39" fill="#f4f4f4" text-anchor="start" font-weight="bold" textLength="16.4" lengthAdjust="spacingAndGlyphs">10</text>
<text x="1028.50" y="624.90" font-size="14.39" fill="#f4f4f4" text-anchor="start" font-weight="bold" textLength="16.4" lengthAdjust="spacingAndGlyphs">15</text>
<text x="1109.20" y="624.90" font-size="14.39" fill="#f4f4f4" text-anchor="start" font-weight="bold" textLength="16.4" lengthAdjust="spacingAndGlyphs">20</text>
<text x="1189.80" y="624.90" font-size="14.39" fill="#f4f4f4" text-anchor="start" font-weight="bold" textLength="16.4" lengthAdjust="spacingAndGlyphs">25</text>
<text x="1270.70" y="624.90" font-size="14.39" fill="#f4f4f4" text-anchor="start" font-weight="bold" textLength="16.4" lengthAdjust="spacingAndGlyphs">30</text>
<text x="1351.60" y="624.90" font-size="14.39" fill="#f4f4f4" text-anchor="start" font-weight="bold" textLength="16.4" lengthAdjust="spacingAndGlyphs">35</text>
<text x="1432.50" y="624.90" font-size="14.39" fill="#f4f4f4" text-anchor="start" font-weight="bold" textLength="16.4" lengthAdjust="spacingAndGlyphs">40</text>
<text x="1512.70" y="624.90" font-size="14.39" fill="#f4f4f4" text-anchor="start" font-weight="bold" textLength="16.4" lengthAdjust="spacingAndGlyphs">45</text>
<text x="1593.60" y="624.90" font-size="14.39" fill="#f4f4f4" text-anchor="start" font-weight="bold" textLength="16.4" lengthAdjust="spacingAndGlyphs">50</text>
<rect x="648.10" y="632.60" width="984.10" height="25.15" fill="#434343"/>
<text x="777.40" y="652.20" font-size="15.84" fill="#f2f2f2" text-anchor="start" font-weight="normal" textLength="45.6" lengthAdjust="spacingAndGlyphs" stroke="#f2f2f2" stroke-width="0.25">0,2448</text>
<text x="866.70" y="652.20" font-size="15.84" fill="#f2f2f2" text-anchor="start" font-weight="normal" textLength="45.6" lengthAdjust="spacingAndGlyphs" stroke="#f2f2f2" stroke-width="0.25">0,3000</text>
<text x="947.40" y="652.20" font-size="15.84" fill="#f2f2f2" text-anchor="start" font-weight="normal" textLength="45.6" lengthAdjust="spacingAndGlyphs" stroke="#f2f2f2" stroke-width="0.25">0,3105</text>
<text x="1028.50" y="652.20" font-size="15.84" fill="#f2f2f2" text-anchor="start" font-weight="normal" textLength="45.6" lengthAdjust="spacingAndGlyphs" stroke="#f2f2f2" stroke-width="0.25">0,3101</text>
<text x="1109.20" y="652.20" font-size="15.84" fill="#f2f2f2" text-anchor="start" font-weight="normal" textLength="45.6" lengthAdjust="spacingAndGlyphs" stroke="#f2f2f2" stroke-width="0.25">0,3106</text>
<text x="1189.80" y="652.20" font-size="15.84" fill="#f2f2f2" text-anchor="start" font-weight="normal" textLength="45.6" lengthAdjust="spacingAndGlyphs" stroke="#f2f2f2" stroke-width="0.25">0,3110</text>
<text x="1270.70" y="652.20" font-size="15.84" fill="#f2f2f2" text-anchor="start" font-weight="normal" textLength="45.6" lengthAdjust="spacingAndGlyphs" stroke="#f2f2f2" stroke-width="0.25">0,3111</text>
<text x="1351.60" y="652.20" font-size="15.84" fill="#f2f2f2" text-anchor="start" font-weight="normal" textLength="45.6" lengthAdjust="spacingAndGlyphs" stroke="#f2f2f2" stroke-width="0.25">0,3107</text>
<text x="1432.50" y="652.20" font-size="15.84" fill="#f2f2f2" text-anchor="start" font-weight="normal" textLength="45.6" lengthAdjust="spacingAndGlyphs" stroke="#f2f2f2" stroke-width="0.25">0,3111</text>
<text x="1512.70" y="652.20" font-size="15.84" fill="#f2f2f2" text-anchor="start" font-weight="normal" textLength="45.6" lengthAdjust="spacingAndGlyphs" stroke="#f2f2f2" stroke-width="0.25">0,3114</text>
<text x="1593.60" y="652.20" font-size="15.84" fill="#f2f2f2" text-anchor="start" font-weight="normal" textLength="45.6" lengthAdjust="spacingAndGlyphs" stroke="#f2f2f2" stroke-width="0.25">0,3116</text>
<rect x="648.10" y="657.75" width="984.10" height="25.15" fill="#7f7f7f"/>
<text x="777.40" y="677.10" font-size="15.84" fill="#f2f2f2" text-anchor="start" font-weight="normal" textLength="45.6" lengthAdjust="spacingAndGlyphs" stroke="#f2f2f2" stroke-width="0.25">0,2116</text>
<text x="866.70" y="677.10" font-size="15.84" fill="#f2f2f2" text-anchor="start" font-weight="normal" textLength="45.6" lengthAdjust="spacingAndGlyphs" stroke="#f2f2f2" stroke-width="0.25">0,3140</text>
<text x="947.40" y="677.10" font-size="15.84" fill="#f2f2f2" text-anchor="start" font-weight="normal" textLength="45.6" lengthAdjust="spacingAndGlyphs" stroke="#f2f2f2" stroke-width="0.25">0,3265</text>
<text x="1028.50" y="677.10" font-size="15.84" fill="#f2f2f2" text-anchor="start" font-weight="normal" textLength="45.6" lengthAdjust="spacingAndGlyphs" stroke="#f2f2f2" stroke-width="0.25">0,3292</text>
<text x="1109.20" y="677.10" font-size="15.84" fill="#f2f2f2" text-anchor="start" font-weight="normal" textLength="45.6" lengthAdjust="spacingAndGlyphs" stroke="#f2f2f2" stroke-width="0.25">0,3294</text>
<text x="1189.80" y="677.10" font-size="15.84" fill="#f2f2f2" text-anchor="start" font-weight="normal" textLength="45.6" lengthAdjust="spacingAndGlyphs" stroke="#f2f2f2" stroke-width="0.25">0,3289</text>
<text x="1270.70" y="677.10" font-size="15.84" fill="#f2f2f2" text-anchor="start" font-weight="normal" textLength="45.6" lengthAdjust="spacingAndGlyphs" stroke="#f2f2f2" stroke-width="0.25">0,3295</text>
<text x="1351.60" y="677.10" font-size="15.84" fill="#f2f2f2" text-anchor="start" font-weight="normal" textLength="45.6" lengthAdjust="spacingAndGlyphs" stroke="#f2f2f2" stroke-width="0.25">0,3298</text>
<text x="1432.50" y="677.10" font-size="15.84" fill="#f2f2f2" text-anchor="start" font-weight="normal" textLength="45.6" lengthAdjust="spacingAndGlyphs" stroke="#f2f2f2" stroke-width="0.25">0,3294</text>
<text x="1512.70" y="677.10" font-size="15.84" fill="#f2f2f2" text-anchor="start" font-weight="normal" textLength="45.6" lengthAdjust="spacingAndGlyphs" stroke="#f2f2f2" stroke-width="0.25">0,3297</text>
<text x="1593.60" y="677.10" font-size="15.84" fill="#f2f2f2" text-anchor="start" font-weight="normal" textLength="45.6" lengthAdjust="spacingAndGlyphs" stroke="#f2f2f2" stroke-width="0.25">0,3302</text>
<rect x="648.10" y="682.90" width="984.10" height="25.15" fill="#434343"/>
<text x="777.40" y="702.00" font-size="15.84" fill="#f2f2f2" text-anchor="start" font-weight="normal" textLength="45.6" lengthAdjust="spacingAndGlyphs" stroke="#f2f2f2" stroke-width="0.25">0,0659</text>
<text x="866.70" y="702.00" font-size="15.84" fill="#f2f2f2" text-anchor="start" font-weight="normal" textLength="45.6" lengthAdjust="spacingAndGlyphs" stroke="#f2f2f2" stroke-width="0.25">0,6538</text>
<text x="947.40" y="702.00" font-size="15.84" fill="#f2f2f2" text-anchor="start" font-weight="normal" textLength="45.6" lengthAdjust="spacingAndGlyphs" stroke="#f2f2f2" stroke-width="0.25">3,1173</text>
<text x="1028.50" y="702.00" font-size="15.84" fill="#f2f2f2" text-anchor="start" font-weight="normal" textLength="45.6" lengthAdjust="spacingAndGlyphs" stroke="#f2f2f2" stroke-width="0.25">7,3228</text>
<text x="1109.20" y="702.00" font-size="15.84" fill="#f2f2f2" text-anchor="start" font-weight="normal" textLength="54.1" lengthAdjust="spacingAndGlyphs" stroke="#f2f2f2" stroke-width="0.25">13,8292</text>
<text x="1189.80" y="702.00" font-size="15.84" fill="#f2f2f2" text-anchor="start" font-weight="normal" textLength="54.1" lengthAdjust="spacingAndGlyphs" stroke="#f2f2f2" stroke-width="0.25">22,7906</text>
<text x="1270.70" y="702.00" font-size="15.84" fill="#f2f2f2" text-anchor="start" font-weight="normal" textLength="54.1" lengthAdjust="spacingAndGlyphs" stroke="#f2f2f2" stroke-width="0.25">33,6654</text>
<text x="1351.60" y="702.00" font-size="15.84" fill="#f2f2f2" text-anchor="start" font-weight="normal" textLength="54.1" lengthAdjust="spacingAndGlyphs" stroke="#f2f2f2" stroke-width="0.25">47,5968</text>
<text x="1432.50" y="702.00" font-size="15.84" fill="#f2f2f2" text-anchor="start" font-weight="normal" textLength="54.1" lengthAdjust="spacingAndGlyphs" stroke="#f2f2f2" stroke-width="0.25">64,1415</text>
<text x="1512.70" y="702.00" font-size="15.84" fill="#f2f2f2" text-anchor="start" font-weight="normal" textLength="54.1" lengthAdjust="spacingAndGlyphs" stroke="#f2f2f2" stroke-width="0.25">83,3943</text>
<text x="1593.60" y="702.00" font-size="15.84" fill="#f2f2f2" text-anchor="start" font-weight="normal" textLength="62.6" lengthAdjust="spacingAndGlyphs" stroke="#f2f2f2" stroke-width="0.25">105,2817</text>
<rect x="648.10" y="708.05" width="984.10" height="25.15" fill="#7f7f7f"/>
<text x="777.40" y="726.90" font-size="15.84" fill="#f2f2f2" text-anchor="start" font-weight="normal" textLength="45.6" lengthAdjust="spacingAndGlyphs" stroke="#f2f2f2" stroke-width="0.25">0,0000</text>
<text x="866.70" y="726.90" font-size="15.84" fill="#f2f2f2" text-anchor="start" font-weight="normal" textLength="45.6" lengthAdjust="spacingAndGlyphs" stroke="#f2f2f2" stroke-width="0.25">1,9687</text>
<text x="947.40" y="726.90" font-size="15.84" fill="#f2f2f2" text-anchor="start" font-weight="normal" textLength="45.6" lengthAdjust="spacingAndGlyphs" stroke="#f2f2f2" stroke-width="0.25">5,0528</text>
<text x="1028.50" y="726.90" font-size="15.84" fill="#f2f2f2" text-anchor="start" font-weight="normal" textLength="45.6" lengthAdjust="spacingAndGlyphs" stroke="#f2f2f2" stroke-width="0.25">9,4809</text>
<text x="1109.20" y="726.90" font-size="15.84" fill="#f2f2f2" text-anchor="start" font-weight="normal" textLength="54.1" lengthAdjust="spacingAndGlyphs" stroke="#f2f2f2" stroke-width="0.25">16,1932</text>
<text x="1189.80" y="726.90" font-size="15.84" fill="#f2f2f2" text-anchor="start" font-weight="normal" textLength="54.1" lengthAdjust="spacingAndGlyphs" stroke="#f2f2f2" stroke-width="0.25">25,0785</text>
<text x="1270.70" y="726.90" font-size="15.84" fill="#f2f2f2" text-anchor="start" font-weight="normal" textLength="54.1" lengthAdjust="spacingAndGlyphs" stroke="#f2f2f2" stroke-width="0.25">35,3518</text>
<text x="1351.60" y="726.90" font-size="15.84" fill="#f2f2f2" text-anchor="start" font-weight="normal" textLength="54.1" lengthAdjust="spacingAndGlyphs" stroke="#f2f2f2" stroke-width="0.25">48,8655</text>
<text x="1432.50" y="726.90" font-size="15.84" fill="#f2f2f2" text-anchor="start" font-weight="normal" textLength="54.1" lengthAdjust="spacingAndGlyphs" stroke="#f2f2f2" stroke-width="0.25">64,9926</text>
<text x="1512.70" y="726.90" font-size="15.84" fill="#f2f2f2" text-anchor="start" font-weight="normal" textLength="54.1" lengthAdjust="spacingAndGlyphs" stroke="#f2f2f2" stroke-width="0.25">83,8605</text>
<text x="1593.60" y="726.90" font-size="15.84" fill="#f2f2f2" text-anchor="start" font-weight="normal" textLength="62.6" lengthAdjust="spacingAndGlyphs" stroke="#f2f2f2" stroke-width="0.25">105,5512</text>
<rect x="648.10" y="733.20" width="984.10" height="25.15" fill="#434343"/>
<text x="777.40" y="751.80" font-size="15.84" fill="#f2f2f2" text-anchor="start" font-weight="normal" textLength="45.6" lengthAdjust="spacingAndGlyphs" stroke="#f2f2f2" stroke-width="0.25">1,2778</text>
<text x="866.70" y="751.80" font-size="15.84" fill="#f2f2f2" text-anchor="start" font-weight="normal" textLength="45.6" lengthAdjust="spacingAndGlyphs" stroke="#f2f2f2" stroke-width="0.25">2,2234</text>
<text x="947.40" y="751.80" font-size="15.84" fill="#f2f2f2" text-anchor="start" font-weight="normal" textLength="45.6" lengthAdjust="spacingAndGlyphs" stroke="#f2f2f2" stroke-width="0.25">2,2143</text>
<text x="1028.50" y="751.80" font-size="15.84" fill="#f2f2f2" text-anchor="start" font-weight="normal" textLength="45.6" lengthAdjust="spacingAndGlyphs" stroke="#f2f2f2" stroke-width="0.25">2,2071</text>
<text x="1109.20" y="751.80" font-size="15.84" fill="#f2f2f2" text-anchor="start" font-weight="normal" textLength="45.6" lengthAdjust="spacingAndGlyphs" stroke="#f2f2f2" stroke-width="0.25">2,2156</text>
<text x="1189.80" y="751.80" font-size="15.84" fill="#f2f2f2" text-anchor="start" font-weight="normal" textLength="45.6" lengthAdjust="spacingAndGlyphs" stroke="#f2f2f2" stroke-width="0.25">2,2181</text>
<text x="1270.70" y="751.80" font-size="15.84" fill="#f2f2f2" text-anchor="start" font-weight="normal" textLength="45.6" lengthAdjust="spacingAndGlyphs" stroke="#f2f2f2" stroke-width="0.25">2,2108</text>
<text x="1351.60" y="751.80" font-size="15.84" fill="#f2f2f2" text-anchor="start" font-weight="normal" textLength="45.6" lengthAdjust="spacingAndGlyphs" stroke="#f2f2f2" stroke-width="0.25">2,2134</text>
<text x="1432.50" y="751.80" font-size="15.84" fill="#f2f2f2" text-anchor="start" font-weight="normal" textLength="45.6" lengthAdjust="spacingAndGlyphs" stroke="#f2f2f2" stroke-width="0.25">2,2172</text>
<text x="1512.70" y="751.80" font-size="15.84" fill="#f2f2f2" text-anchor="start" font-weight="normal" textLength="45.6" lengthAdjust="spacingAndGlyphs" stroke="#f2f2f2" stroke-width="0.25">2,2216</text>
<text x="1593.60" y="751.80" font-size="15.84" fill="#f2f2f2" text-anchor="start" font-weight="normal" textLength="45.6" lengthAdjust="spacingAndGlyphs" stroke="#f2f2f2" stroke-width="0.25">2,2286</text>
<rect x="648.10" y="758.35" width="984.10" height="25.15" fill="#7f7f7f"/>
<text x="777.40" y="776.70" font-size="15.84" fill="#f2f2f2" text-anchor="start" font-weight="normal" textLength="79.6" lengthAdjust="spacingAndGlyphs" stroke="#f2f2f2" stroke-width="0.25">86325,0000</text>
<text x="866.70" y="776.70" font-size="15.84" fill="#f2f2f2" text-anchor="start" font-weight="normal" textLength="71.1" lengthAdjust="spacingAndGlyphs" stroke="#f2f2f2" stroke-width="0.25">7454,0000</text>
<text x="947.40" y="776.70" font-size="15.84" fill="#f2f2f2" text-anchor="start" font-weight="normal" textLength="71.1" lengthAdjust="spacingAndGlyphs" stroke="#f2f2f2" stroke-width="0.25">6644,0000</text>
<text x="1028.50" y="776.70" font-size="15.84" fill="#f2f2f2" text-anchor="start" font-weight="normal" textLength="71.1" lengthAdjust="spacingAndGlyphs" stroke="#f2f2f2" stroke-width="0.25">6645,0000</text>
<text x="1109.20" y="776.70" font-size="15.84" fill="#f2f2f2" text-anchor="start" font-weight="normal" textLength="71.1" lengthAdjust="spacingAndGlyphs" stroke="#f2f2f2" stroke-width="0.25">6615,0000</text>
<text x="1189.80" y="776.70" font-size="15.84" fill="#f2f2f2" text-anchor="start" font-weight="normal" textLength="71.1" lengthAdjust="spacingAndGlyphs" stroke="#f2f2f2" stroke-width="0.25">6600,0000</text>
<text x="1270.70" y="776.70" font-size="15.84" fill="#f2f2f2" text-anchor="start" font-weight="normal" textLength="71.1" lengthAdjust="spacingAndGlyphs" stroke="#f2f2f2" stroke-width="0.25">6589,0000</text>
<text x="1351.60" y="776.70" font-size="15.84" fill="#f2f2f2" text-anchor="start" font-weight="normal" textLength="71.1" lengthAdjust="spacingAndGlyphs" stroke="#f2f2f2" stroke-width="0.25">6609,0000</text>
<text x="1432.50" y="776.70" font-size="15.84" fill="#f2f2f2" text-anchor="start" font-weight="normal" textLength="71.1" lengthAdjust="spacingAndGlyphs" stroke="#f2f2f2" stroke-width="0.25">6590,0000</text>
<text x="1512.70" y="776.70" font-size="15.84" fill="#f2f2f2" text-anchor="start" font-weight="normal" textLength="71.1" lengthAdjust="spacingAndGlyphs" stroke="#f2f2f2" stroke-width="0.25">6572,0000</text>
<text x="1593.60" y="776.70" font-size="15.84" fill="#f2f2f2" text-anchor="start" font-weight="normal" textLength="71.1" lengthAdjust="spacingAndGlyphs" stroke="#f2f2f2" stroke-width="0.25">6553,0000</text>
<rect x="648.10" y="783.50" width="984.10" height="25.15" fill="#434343"/>
<text x="777.40" y="801.60" font-size="15.84" fill="#f2f2f2" text-anchor="start" font-weight="normal" textLength="45.6" lengthAdjust="spacingAndGlyphs" stroke="#f2f2f2" stroke-width="0.25">0,3374</text>
<text x="866.70" y="801.60" font-size="15.84" fill="#f2f2f2" text-anchor="start" font-weight="normal" textLength="45.6" lengthAdjust="spacingAndGlyphs" stroke="#f2f2f2" stroke-width="0.25">1,4450</text>
<text x="947.40" y="801.60" font-size="15.84" fill="#f2f2f2" text-anchor="start" font-weight="normal" textLength="45.6" lengthAdjust="spacingAndGlyphs" stroke="#f2f2f2" stroke-width="0.25">2,1563</text>
<text x="1028.50" y="801.60" font-size="15.84" fill="#f2f2f2" text-anchor="start" font-weight="normal" textLength="45.6" lengthAdjust="spacingAndGlyphs" stroke="#f2f2f2" stroke-width="0.25">1,7632</text>
<text x="1109.20" y="801.60" font-size="15.84" fill="#f2f2f2" text-anchor="start" font-weight="normal" textLength="45.6" lengthAdjust="spacingAndGlyphs" stroke="#f2f2f2" stroke-width="0.25">1,4577</text>
<text x="1189.80" y="801.60" font-size="15.84" fill="#f2f2f2" text-anchor="start" font-weight="normal" textLength="45.6" lengthAdjust="spacingAndGlyphs" stroke="#f2f2f2" stroke-width="0.25">1,1145</text>
<text x="1270.70" y="801.60" font-size="15.84" fill="#f2f2f2" text-anchor="start" font-weight="normal" textLength="45.6" lengthAdjust="spacingAndGlyphs" stroke="#f2f2f2" stroke-width="0.25">0,9178</text>
<text x="1351.60" y="801.60" font-size="15.84" fill="#f2f2f2" text-anchor="start" font-weight="normal" textLength="45.6" lengthAdjust="spacingAndGlyphs" stroke="#f2f2f2" stroke-width="0.25">1,0838</text>
<text x="1432.50" y="801.60" font-size="15.84" fill="#f2f2f2" text-anchor="start" font-weight="normal" textLength="45.6" lengthAdjust="spacingAndGlyphs" stroke="#f2f2f2" stroke-width="0.25">0,8322</text>
<text x="1512.70" y="801.60" font-size="15.84" fill="#f2f2f2" text-anchor="start" font-weight="normal" textLength="45.6" lengthAdjust="spacingAndGlyphs" stroke="#f2f2f2" stroke-width="0.25">0,8953</text>
<text x="1593.60" y="801.60" font-size="15.84" fill="#f2f2f2" text-anchor="start" font-weight="normal" textLength="45.6" lengthAdjust="spacingAndGlyphs" stroke="#f2f2f2" stroke-width="0.25">1,0980</text>
</g>
<rect x="635.10" y="632.60" width="13.00" height="25.15" fill="url(#gRowH)"/>
<rect x="635.10" y="657.75" width="13.00" height="25.15" fill="url(#gRowH)"/>
<rect x="635.10" y="682.90" width="13.00" height="25.15" fill="url(#gRowH)"/>
<rect x="635.10" y="708.05" width="13.00" height="25.15" fill="url(#gRowH)"/>
<rect x="635.10" y="733.20" width="13.00" height="25.15" fill="url(#gRowH)"/>
<rect x="635.10" y="758.35" width="13.00" height="25.15" fill="url(#gRowH)"/>
<rect x="635.10" y="783.50" width="13.00" height="25.15" fill="url(#gRowH)"/>
<text x="651.50" y="652.20" font-size="15.84" fill="#f2f2f2" text-anchor="start" font-weight="normal" textLength="52.8" lengthAdjust="spacingAndGlyphs" stroke="#f2f2f2" stroke-width="0.25">x: CIE31</text>
<text x="651.50" y="677.10" font-size="15.84" fill="#f2f2f2" text-anchor="start" font-weight="normal" textLength="52.8" lengthAdjust="spacingAndGlyphs" stroke="#f2f2f2" stroke-width="0.25">y: CIE31</text>
<text x="651.50" y="702.00" font-size="15.84" fill="#f2f2f2" text-anchor="start" font-weight="normal" textLength="9.5" lengthAdjust="spacingAndGlyphs" stroke="#f2f2f2" stroke-width="0.25">Y</text>
<text x="651.50" y="726.90" font-size="15.84" fill="#f2f2f2" text-anchor="start" font-weight="normal" textLength="55.5" lengthAdjust="spacingAndGlyphs" stroke="#f2f2f2" stroke-width="0.25">Target Y</text>
<text x="651.50" y="751.80" font-size="15.84" fill="#f2f2f2" text-anchor="start" font-weight="normal" textLength="116.0" lengthAdjust="spacingAndGlyphs" stroke="#f2f2f2" stroke-width="0.25">Gamma Log/Log</text>
<text x="651.50" y="776.70" font-size="15.84" fill="#f2f2f2" text-anchor="start" font-weight="normal" textLength="27.5" lengthAdjust="spacingAndGlyphs" stroke="#f2f2f2" stroke-width="0.25">CCT</text>
<text x="651.50" y="801.60" font-size="15.84" fill="#f2f2f2" text-anchor="start" font-weight="normal" textLength="57.0" lengthAdjust="spacingAndGlyphs" stroke="#f2f2f2" stroke-width="0.25">ΔE 2000</text>
<rect x="648.10" y="807.90" width="984.10" height="15.80" fill="#5f5f5f"/>
<rect x="665" y="809.2" width="490.6" height="13.2" rx="6.8" fill="#464646"/>
<rect x="649" y="809.6" width="13" height="12.4" rx="2" fill="#6e6e6e"/>
<path d="M653,815.8 L658,811.8 L658,819.8 Z" fill="#3a3a3a"/>
<rect x="1617.2" y="809.6" width="13" height="12.4" rx="2" fill="#6e6e6e"/>
<path d="M1626.2,815.8 L1621.2,811.8 L1621.2,819.8 Z" fill="#3a3a3a"/>
<rect x="0.00" y="826.00" width="1265.00" height="69.00" fill="#3a3a3a"/>
<rect x="-36.0" y="828.8" width="62" height="60.4" rx="5" fill="url(#gBtn)"/>
<rect x="-29.7" y="835" width="49.6" height="29.8" rx="4.5" fill="rgb(13,13,13)"/>
<path d="M-28.7,863 L-28.7,839.5 Q-28.7,836 -25.0,836 L16.5,836 Q19.5,836 19.5,839" fill="none" stroke="rgba(0,0,0,0.33)" stroke-width="1.6"/>
<text x="-5.00" y="883.80" font-size="12.50" fill="#2b2b2b" text-anchor="middle" font-weight="bold" textLength="6.6" lengthAdjust="spacingAndGlyphs">5</text>
<rect x="29.0" y="828.8" width="62" height="60.4" rx="5" fill="url(#gBtn)"/>
<rect x="35.3" y="835" width="49.6" height="29.8" rx="4.5" fill="rgb(26,26,26)"/>
<path d="M36.3,863 L36.3,839.5 Q36.3,836 40.0,836 L81.5,836 Q84.5,836 84.5,839" fill="none" stroke="rgba(0,0,0,0.33)" stroke-width="1.6"/>
<text x="60.00" y="883.80" font-size="12.50" fill="#2b2b2b" text-anchor="middle" font-weight="bold" textLength="13.2" lengthAdjust="spacingAndGlyphs">10</text>
<rect x="94.0" y="828.8" width="62" height="60.4" rx="5" fill="url(#gBtn)"/>
<rect x="100.3" y="835" width="49.6" height="29.8" rx="4.5" fill="rgb(38,38,38)"/>
<path d="M101.3,863 L101.3,839.5 Q101.3,836 105.0,836 L146.5,836 Q149.5,836 149.5,839" fill="none" stroke="rgba(0,0,0,0.33)" stroke-width="1.6"/>
<text x="125.00" y="883.80" font-size="12.50" fill="#2b2b2b" text-anchor="middle" font-weight="bold" textLength="13.2" lengthAdjust="spacingAndGlyphs">15</text>
<rect x="159.0" y="828.8" width="62" height="60.4" rx="5" fill="url(#gBtn)"/>
<rect x="165.3" y="835" width="49.6" height="29.8" rx="4.5" fill="rgb(51,51,51)"/>
<path d="M166.3,863 L166.3,839.5 Q166.3,836 170.0,836 L211.5,836 Q214.5,836 214.5,839" fill="none" stroke="rgba(0,0,0,0.33)" stroke-width="1.6"/>
<text x="190.00" y="883.80" font-size="12.50" fill="#2b2b2b" text-anchor="middle" font-weight="bold" textLength="13.2" lengthAdjust="spacingAndGlyphs">20</text>
<rect x="224.0" y="828.8" width="62" height="60.4" rx="5" fill="url(#gBtn)"/>
<rect x="230.3" y="835" width="49.6" height="29.8" rx="4.5" fill="rgb(64,64,64)"/>
<path d="M231.3,863 L231.3,839.5 Q231.3,836 235.0,836 L276.5,836 Q279.5,836 279.5,839" fill="none" stroke="rgba(0,0,0,0.33)" stroke-width="1.6"/>
<text x="255.00" y="883.80" font-size="12.50" fill="#2b2b2b" text-anchor="middle" font-weight="bold" textLength="13.2" lengthAdjust="spacingAndGlyphs">25</text>
<rect x="289.0" y="828.8" width="62" height="60.4" rx="5" fill="url(#gBtn)"/>
<rect x="295.3" y="835" width="49.6" height="29.8" rx="4.5" fill="rgb(76,76,76)"/>
<path d="M296.3,863 L296.3,839.5 Q296.3,836 300.0,836 L341.5,836 Q344.5,836 344.5,839" fill="none" stroke="rgba(0,0,0,0.33)" stroke-width="1.6"/>
<text x="320.00" y="883.80" font-size="12.50" fill="#2b2b2b" text-anchor="middle" font-weight="bold" textLength="13.2" lengthAdjust="spacingAndGlyphs">30</text>
<rect x="354.0" y="828.8" width="62" height="60.4" rx="5" fill="url(#gBtn)"/>
<rect x="360.3" y="835" width="49.6" height="29.8" rx="4.5" fill="rgb(89,89,89)"/>
<path d="M361.3,863 L361.3,839.5 Q361.3,836 365.0,836 L406.5,836 Q409.5,836 409.5,839" fill="none" stroke="rgba(0,0,0,0.33)" stroke-width="1.6"/>
<text x="385.00" y="883.80" font-size="12.50" fill="#2b2b2b" text-anchor="middle" font-weight="bold" textLength="13.2" lengthAdjust="spacingAndGlyphs">35</text>
<rect x="419.0" y="828.8" width="62" height="60.4" rx="5" fill="url(#gBtn)"/>
<rect x="425.3" y="835" width="49.6" height="29.8" rx="4.5" fill="rgb(102,102,102)"/>
<path d="M426.3,863 L426.3,839.5 Q426.3,836 430.0,836 L471.5,836 Q474.5,836 474.5,839" fill="none" stroke="rgba(0,0,0,0.33)" stroke-width="1.6"/>
<text x="450.00" y="883.80" font-size="12.50" fill="#2b2b2b" text-anchor="middle" font-weight="bold" textLength="13.2" lengthAdjust="spacingAndGlyphs">40</text>
<rect x="484.0" y="828.8" width="62" height="60.4" rx="5" fill="url(#gBtn)"/>
<rect x="490.3" y="835" width="49.6" height="29.8" rx="4.5" fill="rgb(115,115,115)"/>
<path d="M491.3,863 L491.3,839.5 Q491.3,836 495.0,836 L536.5,836 Q539.5,836 539.5,839" fill="none" stroke="rgba(0,0,0,0.33)" stroke-width="1.6"/>
<text x="515.00" y="883.80" font-size="12.50" fill="#2b2b2b" text-anchor="middle" font-weight="bold" textLength="13.2" lengthAdjust="spacingAndGlyphs">45</text>
<rect x="549.0" y="828.8" width="62" height="60.4" rx="5" fill="url(#gBtn)"/>
<rect x="555.3" y="835" width="49.6" height="29.8" rx="4.5" fill="rgb(128,128,128)"/>
<path d="M556.3,863 L556.3,839.5 Q556.3,836 560.0,836 L601.5,836 Q604.5,836 604.5,839" fill="none" stroke="rgba(0,0,0,0.33)" stroke-width="1.6"/>
<text x="580.00" y="883.80" font-size="12.50" fill="#2b2b2b" text-anchor="middle" font-weight="bold" textLength="13.2" lengthAdjust="spacingAndGlyphs">50</text>
<rect x="614.0" y="828.8" width="62" height="60.4" rx="5" fill="url(#gBtn)"/>
<rect x="620.3" y="835" width="49.6" height="29.8" rx="4.5" fill="rgb(140,140,140)"/>
<path d="M621.3,863 L621.3,839.5 Q621.3,836 625.0,836 L666.5,836 Q669.5,836 669.5,839" fill="none" stroke="rgba(0,0,0,0.33)" stroke-width="1.6"/>
<text x="645.00" y="883.80" font-size="12.50" fill="#2b2b2b" text-anchor="middle" font-weight="bold" textLength="13.2" lengthAdjust="spacingAndGlyphs">55</text>
<rect x="679.0" y="828.8" width="62" height="60.4" rx="5" fill="url(#gBtn)"/>
<rect x="685.3" y="835" width="49.6" height="29.8" rx="4.5" fill="rgb(153,153,153)"/>
<path d="M686.3,863 L686.3,839.5 Q686.3,836 690.0,836 L731.5,836 Q734.5,836 734.5,839" fill="none" stroke="rgba(0,0,0,0.33)" stroke-width="1.6"/>
<text x="710.00" y="883.80" font-size="12.50" fill="#2b2b2b" text-anchor="middle" font-weight="bold" textLength="13.2" lengthAdjust="spacingAndGlyphs">60</text>
<rect x="744.0" y="828.8" width="62" height="60.4" rx="5" fill="url(#gBtn)"/>
<rect x="750.3" y="835" width="49.6" height="29.8" rx="4.5" fill="rgb(166,166,166)"/>
<path d="M751.3,863 L751.3,839.5 Q751.3,836 755.0,836 L796.5,836 Q799.5,836 799.5,839" fill="none" stroke="rgba(0,0,0,0.33)" stroke-width="1.6"/>
<text x="775.00" y="883.80" font-size="12.50" fill="#2b2b2b" text-anchor="middle" font-weight="bold" textLength="13.2" lengthAdjust="spacingAndGlyphs">65</text>
<rect x="809.0" y="828.8" width="62" height="60.4" rx="5" fill="url(#gBtn)"/>
<rect x="815.3" y="835" width="49.6" height="29.8" rx="4.5" fill="rgb(178,178,178)"/>
<path d="M816.3,863 L816.3,839.5 Q816.3,836 820.0,836 L861.5,836 Q864.5,836 864.5,839" fill="none" stroke="rgba(0,0,0,0.33)" stroke-width="1.6"/>
<text x="840.00" y="883.80" font-size="12.50" fill="#2b2b2b" text-anchor="middle" font-weight="bold" textLength="13.2" lengthAdjust="spacingAndGlyphs">70</text>
<rect x="874.0" y="828.8" width="62" height="60.4" rx="5" fill="url(#gBtn)"/>
<rect x="880.3" y="835" width="49.6" height="29.8" rx="4.5" fill="rgb(191,191,191)"/>
<path d="M881.3,863 L881.3,839.5 Q881.3,836 885.0,836 L926.5,836 Q929.5,836 929.5,839" fill="none" stroke="rgba(0,0,0,0.33)" stroke-width="1.6"/>
<text x="905.00" y="883.80" font-size="12.50" fill="#2b2b2b" text-anchor="middle" font-weight="bold" textLength="13.2" lengthAdjust="spacingAndGlyphs">75</text>
<rect x="939.0" y="828.8" width="62" height="60.4" rx="5" fill="url(#gBtn)"/>
<rect x="945.3" y="835" width="49.6" height="29.8" rx="4.5" fill="rgb(204,204,204)"/>
<path d="M946.3,863 L946.3,839.5 Q946.3,836 950.0,836 L991.5,836 Q994.5,836 994.5,839" fill="none" stroke="rgba(0,0,0,0.33)" stroke-width="1.6"/>
<text x="970.00" y="883.80" font-size="12.50" fill="#2b2b2b" text-anchor="middle" font-weight="bold" textLength="13.2" lengthAdjust="spacingAndGlyphs">80</text>
<rect x="1004.0" y="828.8" width="62" height="60.4" rx="5" fill="url(#gBtn)"/>
<rect x="1010.3" y="835" width="49.6" height="29.8" rx="4.5" fill="rgb(217,217,217)"/>
<path d="M1011.3,863 L1011.3,839.5 Q1011.3,836 1015.0,836 L1056.5,836 Q1059.5,836 1059.5,839" fill="none" stroke="rgba(0,0,0,0.33)" stroke-width="1.6"/>
<text x="1035.00" y="883.80" font-size="12.50" fill="#2b2b2b" text-anchor="middle" font-weight="bold" textLength="13.2" lengthAdjust="spacingAndGlyphs">85</text>
<rect x="1069.0" y="828.8" width="62" height="60.4" rx="5" fill="url(#gBtn)"/>
<rect x="1075.3" y="835" width="49.6" height="29.8" rx="4.5" fill="rgb(230,230,230)"/>
<path d="M1076.3,863 L1076.3,839.5 Q1076.3,836 1080.0,836 L1121.5,836 Q1124.5,836 1124.5,839" fill="none" stroke="rgba(0,0,0,0.33)" stroke-width="1.6"/>
<text x="1100.00" y="883.80" font-size="12.50" fill="#2b2b2b" text-anchor="middle" font-weight="bold" textLength="13.2" lengthAdjust="spacingAndGlyphs">90</text>
<rect x="1134.0" y="828.8" width="62" height="60.4" rx="5" fill="url(#gBtn)"/>
<rect x="1140.3" y="835" width="49.6" height="29.8" rx="4.5" fill="rgb(242,242,242)"/>
<path d="M1141.3,863 L1141.3,839.5 Q1141.3,836 1145.0,836 L1186.5,836 Q1189.5,836 1189.5,839" fill="none" stroke="rgba(0,0,0,0.33)" stroke-width="1.6"/>
<text x="1165.00" y="883.80" font-size="12.50" fill="#2b2b2b" text-anchor="middle" font-weight="bold" textLength="13.2" lengthAdjust="spacingAndGlyphs">95</text>
<rect x="1199.0" y="828.8" width="62" height="60.4" rx="5" fill="url(#gBtnSel)"/>
<rect x="1205.3" y="835" width="49.6" height="29.8" rx="4.5" fill="rgb(255,255,255)"/>
<text x="1230.00" y="883.80" font-size="12.50" fill="#ffffff" text-anchor="middle" font-weight="bold" textLength="19.8" lengthAdjust="spacingAndGlyphs">100</text>
<rect x="0.00" y="889.20" width="1265.00" height="6.00" fill="#4a4a4a"/>
<rect x="1" y="890" width="14" height="10" rx="4" fill="#6a6a6a"/>
<rect x="110" y="890.5" width="1140" height="10" rx="5" fill="#3a3a3a"/>
<rect x="1250" y="890" width="13" height="10" rx="3" fill="#6a6a6a"/>
<rect x="1262.00" y="826.00" width="393.00" height="69.00" fill="#333333"/>
<rect x="1265.2" y="828.9" width="59.6" height="22.4" rx="4" fill="url(#gBtn2)"/>
<circle cx="1295" cy="841" r="9.5" fill="url(#gDrop2)"/>
<path d="M1289,843.5 L1301,843.5 L1295,837 Z" fill="#333"/>
<line x1="1265.20" y1="851.80" x2="1324.80" y2="851.80" stroke="#4a4a4a" stroke-width="1.2"/>
<rect x="1265.2" y="852.4" width="59.6" height="45" rx="3" fill="url(#gBtn2)"/>
<rect x="1277" y="860.5" width="37" height="38" rx="4" fill="#2a2a2a"/>
<rect x="1279.3" y="862.5" width="32" height="36" rx="3" fill="#9e9e9e"/>
<rect x="1287" y="870" width="17" height="17" fill="#000"/>
<rect x="1325.8" y="828.1" width="57.8" height="38.1" fill="url(#gCtl)"/>
<circle cx="1354.7" cy="847.3" r="12.5" fill="url(#gCtlC)"/>
<rect x="1385.2" y="828.1" width="54.4" height="38.1" fill="url(#gCtl)"/>
<circle cx="1412.4" cy="847.3" r="12.5" fill="url(#gCtlC)"/>
<rect x="1441.2" y="828.1" width="54.7" height="38.1" fill="url(#gCtl)"/>
<circle cx="1468.6" cy="847.3" r="12.5" fill="url(#gCtlC)"/>
<rect x="1497.5" y="828.1" width="54.9" height="38.1" fill="url(#gCtl)"/>
<circle cx="1525.0" cy="847.3" r="12.5" fill="url(#gCtlC)"/>
<rect x="1554.0" y="828.1" width="54.2" height="38.1" fill="url(#gCtl)"/>
<circle cx="1581.1" cy="847.3" r="12.5" fill="url(#gCtlC)"/>
<path d="M1320,828 Q1325,828 1325.8,833 L1325.8,866" fill="none" stroke="#2a2a2a" stroke-width="1"/>
<rect x="1349.8" y="842.3" width="10" height="10" fill="#2a2a2a"/>
<path d="M1408.5,840.5 L1408.5,855 L1419.5,847.7 Z" fill="#2a2a2a"/>
<path d="M1462.5,840 L1460.5,840 L1460.5,855 L1462.5,855 M1474.5,840 L1476.5,840 L1476.5,855 L1474.5,855" fill="none" stroke="#2a2a2a" stroke-width="2.2"/>
<circle cx="1465.5" cy="847.5" r="1.2" fill="#2a2a2a"/><circle cx="1471.5" cy="847.5" r="1.2" fill="#2a2a2a"/><rect x="1466" y="847" width="5" height="1" fill="#2a2a2a"/>
<path d="M1516.5,847.3 C1516.5,843 1524.9,843 1525,847.3 C1525.1,851.6 1533.5,851.6 1533.5,847.3 C1533.5,843 1525.1,843 1525,847.3 C1524.9,851.6 1516.5,851.6 1516.5,847.3 Z" fill="none" stroke="#2a2a2a" stroke-width="2"/>
<path d="M1574.5,845 A7,7 0 0 1 1587.5,845.5" fill="none" stroke="#2a2a2a" stroke-width="2.6"/><path d="M1589.5,842 L1588.5,848 L1583.5,845.5 Z" fill="#2a2a2a"/>
<path d="M1587.5,849.5 A7,7 0 0 1 1574.5,849" fill="none" stroke="#2a2a2a" stroke-width="2.6"/><path d="M1572.5,852.5 L1573.5,846.5 L1578.5,849 Z" fill="#2a2a2a"/>
<rect x="1609.00" y="828.10" width="46.00" height="38.10" fill="#303030"/>
<circle cx="1638.8" cy="847.3" r="13" fill="#262626"/>
<rect x="1325.8" y="867.6" width="170.6" height="32" rx="4" fill="url(#gNav)"/>
<rect x="1497.5" y="867.6" width="170" height="32" rx="4" fill="url(#gNav)"/>
<rect x="1320.00" y="866.20" width="340.00" height="1.40" fill="#2a2a2a"/>
<line x1="1496.90" y1="866.00" x2="1496.90" y2="895.00" stroke="#2a2a2a" stroke-width="1.4"/>
<circle cx="1365" cy="886.5" r="12" fill="url(#gNavC)"/>
<circle cx="1631.7" cy="886.5" r="12" fill="url(#gNavC)"/>
<path d="M1366,881.5 L1361.5,886 L1366,890.5 M1370.5,881.5 L1366,886 L1370.5,890.5" fill="none" stroke="#333" stroke-width="1.7"/>
<path d="M1627,881.5 L1631.5,886 L1627,890.5 M1631.5,881.5 L1636,886 L1631.5,890.5" fill="none" stroke="#333" stroke-width="1.7"/>
<text x="1399.00" y="896.20" font-size="29.65" fill="#2e2e2e" text-anchor="start" font-weight="normal" textLength="62.0" lengthAdjust="spacingAndGlyphs" stroke="#2e2e2e" stroke-width="0.7">Back</text>
<text x="1532.10" y="896.20" font-size="29.65" fill="#2e2e2e" text-anchor="start" font-weight="normal" textLength="64.2" lengthAdjust="spacingAndGlyphs" stroke="#2e2e2e" stroke-width="0.7">Next</text>
</svg>
</body></html>
